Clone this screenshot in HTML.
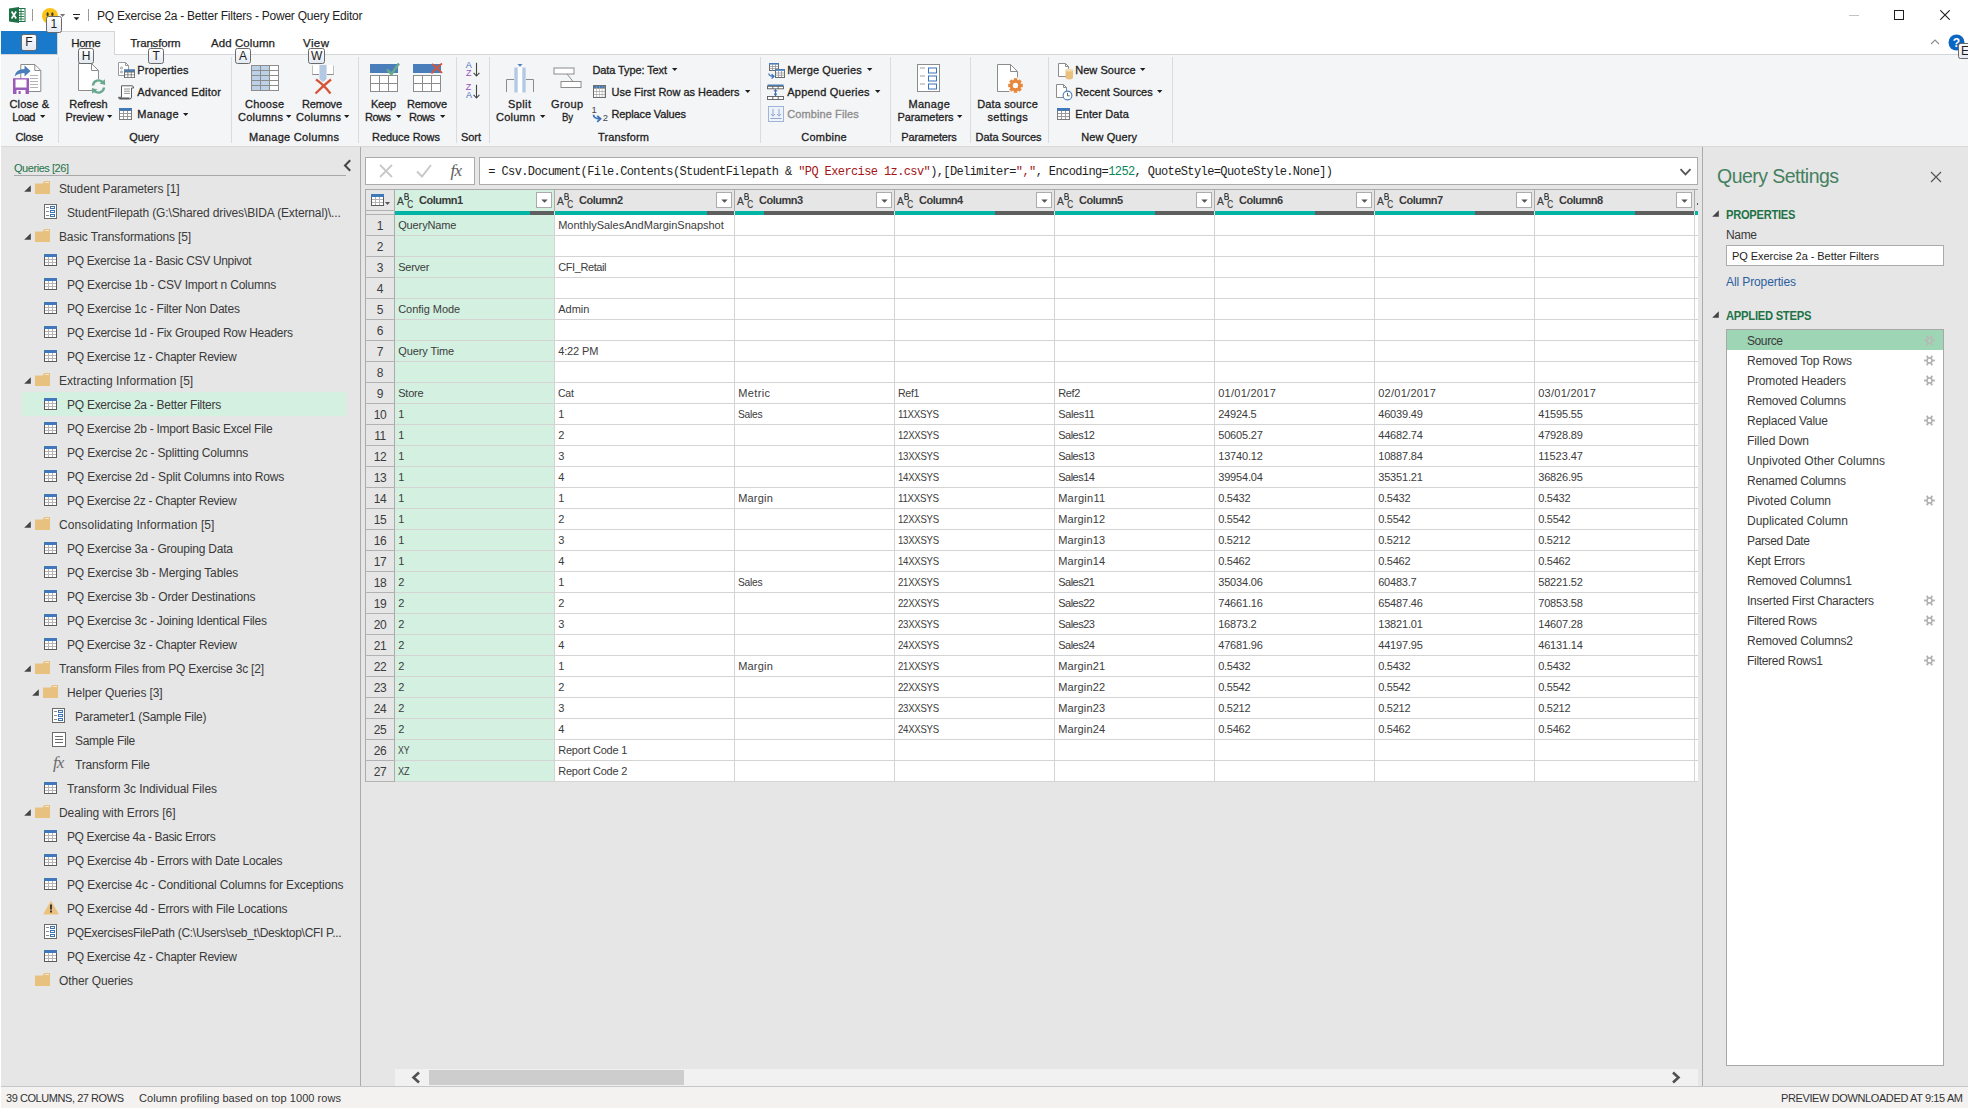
<!DOCTYPE html>
<html><head><meta charset="utf-8"><title>PQ Exercise 2a - Better Filters - Power Query Editor</title>
<style>
html,body{margin:0;padding:0;overflow:hidden;}
body{width:1969px;height:1109px;overflow:hidden;position:relative;background:#e6e6e6;font-family:"Liberation Sans",sans-serif;}
.a{position:absolute;display:block;}
.t{position:absolute;white-space:nowrap;font-family:"Liberation Sans",sans-serif;}
</style></head><body>
<div class="a" style="left:0px;top:0px;width:1969px;height:54px;background:#ffffff;"></div>
<div class="a" style="left:0px;top:54px;width:1969px;height:92px;background:#f4f5f7;"></div>
<div class="a" style="left:0px;top:54px;width:1969px;height:1px;background:#d4d5d6;"></div>
<div class="a" style="left:0px;top:146px;width:1969px;height:1px;background:#d9d9d9;"></div>
<div class="a" style="left:360px;top:147px;width:1px;height:939px;background:#ababab;"></div>
<div class="a" style="left:1702px;top:147px;width:1px;height:939px;background:#ababab;"></div>
<svg class="a" style="left:9px;top:7px" width="17" height="16" viewBox="0 0 17 16"><rect x="6" y="1.5" width="10" height="13" fill="#fff" stroke="#1e7145" stroke-width="1"/>
<path d="M9 4.5h6M9 7h6M9 9.5h6M9 12h6M12 2v12" stroke="#1e7145" stroke-width="0.9" fill="none"/>
<path d="M0 1.6 L10 0 L10 16 L0 14.4 Z" fill="#1e7145"/>
<path d="M2.6 4.6 L7.2 11.4 M7.2 4.6 L2.6 11.4" stroke="#fff" stroke-width="1.7" fill="none"/></svg>
<div class="a" style="left:32px;top:9px;width:1px;height:12px;background:#9a9a9a;"></div>
<svg class="a" style="left:42px;top:8px" width="16" height="16" viewBox="0 0 16 16"><circle cx="8" cy="8" r="8" fill="#fbc316"/><ellipse cx="5.6" cy="6.2" rx="1.1" ry="1.9" fill="#3a3a3a"/><ellipse cx="10.4" cy="6.2" rx="1.1" ry="1.9" fill="#3a3a3a"/></svg>
<svg class="a" style="left:60px;top:14px" width="6" height="4" viewBox="0 0 6 4"><path d="M0 0 L5.2 0 L2.6 2.9 Z" fill="#777"/></svg>
<div class="a" style="left:73px;top:14px;width:7px;height:1px;background:#222;"></div>
<svg class="a" style="left:73px;top:17px" width="7" height="4" viewBox="0 0 7 4"><path d="M0.6 0.3 L6.4 0.3 L3.5 3.3 Z" fill="#222"/></svg>
<div class="a" style="left:88px;top:9px;width:1px;height:12px;background:#9a9a9a;"></div>
<div class="t" style="left:97.00px;top:6.80px;font-size:12px;line-height:18px;color:#1e1e1e;letter-spacing:-0.234px;">PQ Exercise 2a - Better Filters - Power Query Editor</div>
<div class="a" style="left:1849px;top:15px;width:10px;height:1px;background:#c4c4c4;"></div>
<div class="a" style="left:1894px;top:10px;width:10px;height:10px;border:1px solid #1e1e1e;box-sizing:border-box;"></div>
<svg class="a" style="left:1940px;top:10px" width="10" height="10" viewBox="0 0 10 10"><path d="M0.3 0.3 L9.7 9.7 M9.7 0.3 L0.3 9.7" stroke="#1e1e1e" stroke-width="1.1" fill="none"/></svg>
<svg class="a" style="left:1930px;top:39px" width="10" height="6" viewBox="0 0 10 6"><path d="M1 5 L5 1 L9 5" fill="none" stroke="#8c8c8c" stroke-width="1.1"/></svg>
<svg class="a" style="left:1948px;top:33.5px" width="17" height="17" viewBox="0 0 17 17"><circle cx="8.5" cy="8.5" r="8" fill="#0a66c2"/><text x="8.5" y="13" font-family="Liberation Sans" font-weight="bold" font-size="12" fill="#fff" text-anchor="middle">?</text></svg>
<div class="a" style="left:1px;top:31px;width:56px;height:23px;background:#1979ca;"></div>
<div class="a" style="left:57px;top:31px;width:58px;height:24px;background:#f4f5f7;border:1px solid #d4d5d6;box-sizing:border-box;border-bottom:none;"></div>
<div class="t" style="left:71.30px;top:35.35px;font-size:11.5px;line-height:17.5px;color:#1e1e1e;letter-spacing:-0.459px;-webkit-text-stroke:0.25px #1e1e1e;">Home</div>
<div class="t" style="left:130.20px;top:35.35px;font-size:11.5px;line-height:17.5px;color:#1e1e1e;letter-spacing:-0.196px;-webkit-text-stroke:0.25px #1e1e1e;">Transform</div>
<div class="t" style="left:211.00px;top:35.35px;font-size:11.5px;line-height:17.5px;color:#1e1e1e;letter-spacing:0.080px;-webkit-text-stroke:0.25px #1e1e1e;">Add Column</div>
<div class="t" style="left:303.00px;top:35.35px;font-size:11.5px;line-height:17.5px;color:#1e1e1e;letter-spacing:0.427px;-webkit-text-stroke:0.25px #1e1e1e;">View</div>
<div class="a" style="left:58px;top:57px;width:1px;height:86px;background:#dadbdc;"></div>
<div class="a" style="left:231px;top:57px;width:1px;height:86px;background:#dadbdc;"></div>
<div class="a" style="left:358px;top:57px;width:1px;height:86px;background:#dadbdc;"></div>
<div class="a" style="left:456px;top:57px;width:1px;height:86px;background:#dadbdc;"></div>
<div class="a" style="left:489px;top:57px;width:1px;height:86px;background:#dadbdc;"></div>
<div class="a" style="left:760px;top:57px;width:1px;height:86px;background:#dadbdc;"></div>
<div class="a" style="left:890px;top:57px;width:1px;height:86px;background:#dadbdc;"></div>
<div class="a" style="left:970px;top:57px;width:1px;height:86px;background:#dadbdc;"></div>
<div class="a" style="left:1048px;top:57px;width:1px;height:86px;background:#dadbdc;"></div>
<div class="a" style="left:1172px;top:57px;width:1px;height:86px;background:#dadbdc;"></div>
<div class="t" style="left:9.50px;top:95.80px;font-size:11px;line-height:17px;color:#1e1e1e;letter-spacing:0.164px;-webkit-text-stroke:0.3px #1e1e1e;">Close &amp;</div>
<div class="t" style="left:12.20px;top:108.50px;font-size:11px;line-height:17px;color:#1e1e1e;letter-spacing:-0.391px;-webkit-text-stroke:0.3px #1e1e1e;">Load</div>
<svg class="a" style="left:39.5px;top:115px" width="6" height="3" viewBox="0 0 6 3"><path d="M0 0 L5.4 0 L2.7 3 Z" fill="#1e1e1e"/></svg>
<div class="t" style="left:15.60px;top:128.80px;font-size:11px;line-height:17px;color:#1e1e1e;letter-spacing:-0.181px;-webkit-text-stroke:0.3px #1e1e1e;">Close</div>
<svg class="a" style="left:12px;top:63px" width="30" height="32" viewBox="0 0 30 32">
<path d="M8.8 1.5 L22.8 1.5 L28.8 7.5 L28.8 28.5 L8.8 28.5 Z" fill="#fff" stroke="#8a8a8a"/>
<path d="M22.8 1.5 L22.8 7.5 L28.8 7.5" fill="none" stroke="#8a8a8a"/>
<path d="M18 12.5h8M18 15.5h8M18 18.5h8M18 21.5h8M18 24.5h8" stroke="#b4b4b4" stroke-width="1"/>
<path d="M2.6 13.5 Q3.5 6 12.5 6 L12.5 2.4 L18.6 8 L12.5 13.4 L12.5 10 Q6 10 2.6 13.5 Z" fill="#4a7ebb"/>
<path d="M1 15.2 L17 15.2 L17 31 L1 31 Z" fill="#9a5cb8" />
<rect x="3.5" y="16.5" width="11" height="8" fill="#fff"/>
<rect x="4.5" y="27" width="9" height="4" fill="#fff"/><rect x="6.5" y="28" width="2.2" height="3" fill="#9a5cb8"/></svg>
<div class="t" style="left:69.30px;top:95.80px;font-size:11px;line-height:17px;color:#1e1e1e;letter-spacing:-0.036px;-webkit-text-stroke:0.3px #1e1e1e;">Refresh</div>
<div class="t" style="left:65.40px;top:108.50px;font-size:11px;line-height:17px;color:#1e1e1e;letter-spacing:-0.088px;-webkit-text-stroke:0.3px #1e1e1e;">Preview</div>
<svg class="a" style="left:107px;top:115px" width="6" height="3" viewBox="0 0 6 3"><path d="M0 0 L5.4 0 L2.7 3 Z" fill="#1e1e1e"/></svg>
<svg class="a" style="left:78px;top:63px" width="28" height="31" viewBox="0 0 28 31">
<path d="M0.5 0.5 L13.5 0.5 L20.5 7.5 L20.5 27.5 L0.5 27.5 Z" fill="#fff" stroke="#8c8c8c"/>
<path d="M13.5 0.5 L13.5 7.5 L20.5 7.5" fill="none" stroke="#8c8c8c"/>
<circle cx="20.5" cy="23.5" r="7.5" fill="#f4f5f7"/>
<path d="M15 22.5 A5.6 5.6 0 0 1 25 19.6" fill="none" stroke="#68a88f" stroke-width="2.4"/>
<path d="M26.8 16.2 L27.2 22 L21.6 20.6 Z" fill="#68a88f"/>
<path d="M26 24.5 A5.6 5.6 0 0 1 16 27.4" fill="none" stroke="#68a88f" stroke-width="2.4"/>
<path d="M14.2 30.8 L13.8 25 L19.4 26.4 Z" fill="#68a88f"/></svg>
<svg class="a" style="left:118px;top:62px" width="17" height="16" viewBox="0 0 17 16">
<path d="M0.5 0.5 L7.5 0.5 L10.5 3.5 L10.5 13.5 L0.5 13.5 Z" fill="#fff" stroke="#9a9a9a"/>
<path d="M7.5 0.5 L7.5 3.5 L10.5 3.5" fill="none" stroke="#9a9a9a"/>
<circle cx="3.5" cy="6" r="1" fill="none" stroke="#8a8a8a" stroke-width="0.8"/><circle cx="3.5" cy="10" r="1" fill="none" stroke="#8a8a8a" stroke-width="0.8"/>
<rect x="6" y="7.5" width="11" height="8.5" fill="#6a6a6a"/><rect x="6" y="7.5" width="11" height="2" fill="#4a7ebb"/>
<rect x="7" y="10.5" width="2.5" height="2" fill="#fff"/><rect x="10.3" y="10.5" width="2.5" height="2" fill="#fff"/><rect x="13.6" y="10.5" width="2.5" height="2" fill="#fff"/>
<rect x="7" y="13.2" width="2.5" height="2" fill="#fff"/><rect x="10.3" y="13.2" width="2.5" height="2" fill="#fff"/><rect x="13.6" y="13.2" width="2.5" height="2" fill="#fff"/></svg>
<div class="t" style="left:137.30px;top:61.70px;font-size:11px;line-height:17px;color:#1e1e1e;letter-spacing:0.107px;-webkit-text-stroke:0.3px #1e1e1e;">Properties</div>
<svg class="a" style="left:118px;top:85px" width="17" height="15" viewBox="0 0 17 15">
<path d="M3.5 0.8 L14 0.8 Q15.6 0.8 15.6 3 L13.5 3 L13.5 12 Q13.5 14 11.5 14 L2 14 Q0.5 14 0.5 12.3 L3.5 12.3 Z" fill="#fff" stroke="#5a5a5a"/>
<path d="M0.8 12.6 L11.5 12.6 L11.5 14 L2 14 Z" fill="#5a5a5a"/>
<path d="M6 4h6M6 6.2h6M6 8.4h6" stroke="#8a8a8a" stroke-width="0.9"/></svg>
<div class="t" style="left:137.30px;top:83.70px;font-size:11px;line-height:17px;color:#1e1e1e;letter-spacing:0.213px;-webkit-text-stroke:0.3px #1e1e1e;">Advanced Editor</div>
<svg class="a" style="left:119px;top:108px" width="13" height="12" viewBox="0 0 13 12"><rect x="0" y="0" width="13" height="12" fill="#7a7a7a"/><rect x="1" y="3" width="11" height="8" fill="#9a9a9a"/><rect x="0" y="0" width="13" height="2.6" fill="#3f79ba"/><rect x="1" y="3" width="3" height="2" fill="#fff"/><rect x="5" y="3" width="3" height="2" fill="#fff"/><rect x="9" y="3" width="3" height="2" fill="#fff"/><rect x="1" y="6" width="3" height="2" fill="#fff"/><rect x="5" y="6" width="3" height="2" fill="#fff"/><rect x="9" y="6" width="3" height="2" fill="#fff"/><rect x="1" y="9" width="3" height="2" fill="#fff"/><rect x="5" y="9" width="3" height="2" fill="#fff"/><rect x="9" y="9" width="3" height="2" fill="#fff"/></svg>
<div class="t" style="left:137.30px;top:105.70px;font-size:11px;line-height:17px;color:#1e1e1e;letter-spacing:0.309px;-webkit-text-stroke:0.3px #1e1e1e;">Manage</div>
<svg class="a" style="left:183px;top:113px" width="6" height="3" viewBox="0 0 6 3"><path d="M0 0 L5.4 0 L2.7 3 Z" fill="#1e1e1e"/></svg>
<div class="t" style="left:129.20px;top:128.80px;font-size:11px;line-height:17px;color:#1e1e1e;letter-spacing:-0.039px;-webkit-text-stroke:0.3px #1e1e1e;">Query</div>
<svg class="a" style="left:251px;top:65px" width="28" height="26" viewBox="0 0 28 26"><rect x="0" y="0" width="28" height="26" fill="#8c8c8c"/><rect x="1" y="1" width="8" height="4" fill="#bcd0e8"/><rect x="10" y="1" width="8" height="4" fill="#bcd0e8"/><rect x="19" y="1" width="8" height="4" fill="#fff"/><rect x="1" y="6" width="8" height="4" fill="#bcd0e8"/><rect x="10" y="6" width="8" height="4" fill="#bcd0e8"/><rect x="19" y="6" width="8" height="4" fill="#fff"/><rect x="1" y="11" width="8" height="4" fill="#bcd0e8"/><rect x="10" y="11" width="8" height="4" fill="#bcd0e8"/><rect x="19" y="11" width="8" height="4" fill="#fff"/><rect x="1" y="16" width="8" height="4" fill="#bcd0e8"/><rect x="10" y="16" width="8" height="4" fill="#bcd0e8"/><rect x="19" y="16" width="8" height="4" fill="#fff"/><rect x="1" y="21" width="8" height="4" fill="#bcd0e8"/><rect x="10" y="21" width="8" height="4" fill="#bcd0e8"/><rect x="19" y="21" width="8" height="4" fill="#fff"/></svg>
<div class="t" style="left:245.00px;top:95.80px;font-size:11px;line-height:17px;color:#1e1e1e;letter-spacing:0.217px;-webkit-text-stroke:0.3px #1e1e1e;">Choose</div>
<div class="t" style="left:238.00px;top:108.50px;font-size:11px;line-height:17px;color:#1e1e1e;letter-spacing:0.266px;-webkit-text-stroke:0.3px #1e1e1e;">Columns</div>
<svg class="a" style="left:286px;top:115px" width="6" height="3" viewBox="0 0 6 3"><path d="M0 0 L5.4 0 L2.7 3 Z" fill="#1e1e1e"/></svg>
<svg class="a" style="left:311px;top:64px" width="24" height="31" viewBox="0 0 24 31">
<path d="M1.5 1.5 L1.5 10.5 L8 10.5" fill="none" stroke="#8c8c8c"/><path d="M22.5 1.5 L22.5 10.5 L16 10.5" fill="none" stroke="#8c8c8c"/>
<rect x="1.5" y="1" width="6.5" height="9" fill="#fff" opacity="0.9"/><rect x="16" y="1" width="6.5" height="9" fill="#fff" opacity="0.9"/>
<path d="M8.5 1 L15.5 1 L15.5 15 L12 18 L8.5 15 Z" fill="#b3c8e2"/>
<path d="M5 15.5 Q12 20 19.5 29.5 M20 15.5 Q12 22 4.5 29.5" fill="none" stroke="#d6553a" stroke-width="2.3"/></svg>
<div class="t" style="left:302.00px;top:95.80px;font-size:11px;line-height:17px;color:#1e1e1e;letter-spacing:-0.192px;-webkit-text-stroke:0.3px #1e1e1e;">Remove</div>
<div class="t" style="left:296.00px;top:108.50px;font-size:11px;line-height:17px;color:#1e1e1e;letter-spacing:0.266px;-webkit-text-stroke:0.3px #1e1e1e;">Columns</div>
<svg class="a" style="left:344px;top:115px" width="6" height="3" viewBox="0 0 6 3"><path d="M0 0 L5.4 0 L2.7 3 Z" fill="#1e1e1e"/></svg>
<div class="t" style="left:249.00px;top:128.80px;font-size:11px;line-height:17px;color:#1e1e1e;letter-spacing:0.291px;-webkit-text-stroke:0.3px #1e1e1e;">Manage Columns</div>
<svg class="a" style="left:370px;top:62px" width="30" height="30" viewBox="0 0 30 30"><g transform="translate(0,2)"><rect x="0" y="0" width="28" height="9" fill="#4a7ebb"/><rect x="0" y="11" width="28" height="17" fill="#8c8c8c"/><rect x="1" y="12" width="8" height="7" fill="#fff"/><rect x="10" y="12" width="8" height="7" fill="#fff"/><rect x="19" y="12" width="8" height="7" fill="#fff"/><rect x="1" y="20" width="8" height="7" fill="#fff"/><rect x="10" y="20" width="8" height="7" fill="#fff"/><rect x="19" y="20" width="8" height="7" fill="#fff"/></g><path d="M17 7.5 L21.5 12 L29 1.5" fill="none" stroke="#68a88f" stroke-width="2.6"/></svg>
<svg class="a" style="left:413px;top:62px" width="30" height="30" viewBox="0 0 30 30"><g transform="translate(0,2)"><rect x="0" y="0" width="28" height="9" fill="#4a7ebb"/><rect x="0" y="11" width="28" height="17" fill="#8c8c8c"/><rect x="1" y="12" width="8" height="7" fill="#fff"/><rect x="10" y="12" width="8" height="7" fill="#fff"/><rect x="19" y="12" width="8" height="7" fill="#fff"/><rect x="1" y="20" width="8" height="7" fill="#fff"/><rect x="10" y="20" width="8" height="7" fill="#fff"/><rect x="19" y="20" width="8" height="7" fill="#fff"/></g><path d="M19 2 Q24 5 29 11 M29 1.5 Q23 6 18.5 11.5" fill="none" stroke="#d6553a" stroke-width="1.9"/></svg>
<div class="t" style="left:371.00px;top:95.80px;font-size:11px;line-height:17px;color:#1e1e1e;letter-spacing:-0.230px;-webkit-text-stroke:0.3px #1e1e1e;">Keep</div>
<div class="t" style="left:365.00px;top:108.50px;font-size:11px;line-height:17px;color:#1e1e1e;letter-spacing:-0.502px;-webkit-text-stroke:0.3px #1e1e1e;">Rows</div>
<svg class="a" style="left:396px;top:115px" width="6" height="3" viewBox="0 0 6 3"><path d="M0 0 L5.4 0 L2.7 3 Z" fill="#1e1e1e"/></svg>
<div class="t" style="left:407.00px;top:95.80px;font-size:11px;line-height:17px;color:#1e1e1e;letter-spacing:-0.192px;-webkit-text-stroke:0.3px #1e1e1e;">Remove</div>
<div class="t" style="left:409.00px;top:108.50px;font-size:11px;line-height:17px;color:#1e1e1e;letter-spacing:-0.502px;-webkit-text-stroke:0.3px #1e1e1e;">Rows</div>
<svg class="a" style="left:440px;top:115px" width="6" height="3" viewBox="0 0 6 3"><path d="M0 0 L5.4 0 L2.7 3 Z" fill="#1e1e1e"/></svg>
<div class="t" style="left:372.00px;top:128.80px;font-size:11px;line-height:17px;color:#1e1e1e;letter-spacing:-0.048px;-webkit-text-stroke:0.3px #1e1e1e;">Reduce Rows</div>
<div class="t" style="left:465.7px;top:60.4px;font-size:9px;line-height:10px;color:#4a6fc0">A</div>
<div class="t" style="left:466px;top:68.2px;font-size:9px;line-height:10px;color:#9b4fc4">Z</div>
<svg class="a" style="left:473px;top:62px" width="8" height="15" viewBox="0 0 8 15"><path d="M3.5 0.8 L3.5 14 M0.6 10.8 L3.5 14 L6.4 10.8" fill="none" stroke="#444" stroke-width="1.1"/></svg>
<div class="t" style="left:465.7px;top:82.4px;font-size:9px;line-height:10px;color:#9b4fc4">Z</div>
<div class="t" style="left:466px;top:90.2px;font-size:9px;line-height:10px;color:#4a6fc0">A</div>
<svg class="a" style="left:473px;top:84px" width="8" height="15" viewBox="0 0 8 15"><path d="M3.5 0.8 L3.5 14 M0.6 10.8 L3.5 14 L6.4 10.8" fill="none" stroke="#444" stroke-width="1.1"/></svg>
<div class="t" style="left:461.00px;top:128.80px;font-size:11px;line-height:17px;color:#1e1e1e;letter-spacing:-0.058px;-webkit-text-stroke:0.3px #1e1e1e;">Sort</div>
<svg class="a" style="left:505px;top:63px" width="30" height="30" viewBox="0 0 30 30">
<path d="M1.5 29 L1.5 16.5 L9 16.5" fill="none" stroke="#8c8c8c"/><path d="M28.5 29 L28.5 16.5 L21 16.5" fill="none" stroke="#8c8c8c"/>
<rect x="9.5" y="4.5" width="11" height="25" fill="#fff"/>
<rect x="9.3" y="4.5" width="3.4" height="25" fill="#b3c8e2"/><rect x="17.3" y="4.5" width="3.4" height="25" fill="#b3c8e2"/>
<path d="M12.5 1 L17.5 1 L15 3.8 Z" fill="#4a7ebb"/></svg>
<div class="t" style="left:508.00px;top:95.80px;font-size:11px;line-height:17px;color:#1e1e1e;letter-spacing:0.400px;-webkit-text-stroke:0.3px #1e1e1e;">Split</div>
<div class="t" style="left:496.00px;top:108.50px;font-size:11px;line-height:17px;color:#1e1e1e;letter-spacing:0.219px;-webkit-text-stroke:0.3px #1e1e1e;">Column</div>
<svg class="a" style="left:539.5px;top:115px" width="6" height="3" viewBox="0 0 6 3"><path d="M0 0 L5.4 0 L2.7 3 Z" fill="#1e1e1e"/></svg>
<svg class="a" style="left:553px;top:67px" width="30" height="22" viewBox="0 0 30 22">
<rect x="1" y="1" width="20" height="6" fill="#fff" stroke="#8c8c8c"/>
<rect x="8" y="14.5" width="20" height="6" fill="#fff" stroke="#8c8c8c"/>
<path d="M14 7 L20 14.5" stroke="#8c8c8c" fill="none"/></svg>
<div class="t" style="left:551.00px;top:95.80px;font-size:11px;line-height:17px;color:#1e1e1e;letter-spacing:0.356px;-webkit-text-stroke:0.3px #1e1e1e;">Group</div>
<div class="t" style="left:562.00px;top:108.50px;font-size:11px;line-height:17px;color:#1e1e1e;letter-spacing:-0.300px;transform:scaleX(0.8774);transform-origin:0 0;-webkit-text-stroke:0.3px #1e1e1e;">By</div>
<div class="t" style="left:592.50px;top:61.50px;font-size:11px;line-height:17px;color:#1e1e1e;letter-spacing:-0.110px;-webkit-text-stroke:0.3px #1e1e1e;">Data Type: Text</div>
<svg class="a" style="left:671.5px;top:68px" width="6" height="3" viewBox="0 0 6 3"><path d="M0 0 L5.4 0 L2.7 3 Z" fill="#1e1e1e"/></svg>
<svg class="a" style="left:593px;top:85px" width="13" height="13" viewBox="0 0 13 13"><rect x="0" y="0" width="13" height="13" fill="#6e6e6e"/><rect x="1" y="1" width="11" height="11" fill="#a8a8a8"/><rect x="1.00" y="1" width="2.2" height="2" fill="#3f79ba"/><rect x="3.80" y="1" width="2.2" height="2" fill="#3f79ba"/><rect x="6.60" y="1" width="2.2" height="2" fill="#3f79ba"/><rect x="9.40" y="1" width="2.2" height="2" fill="#3f79ba"/><rect x="1.00" y="4.00" width="2.2" height="2.1" fill="#fff"/><rect x="3.80" y="4.00" width="2.2" height="2.1" fill="#fff"/><rect x="6.60" y="4.00" width="2.2" height="2.1" fill="#fff"/><rect x="9.40" y="4.00" width="2.2" height="2.1" fill="#fff"/><rect x="1.00" y="6.90" width="2.2" height="2.1" fill="#fff"/><rect x="3.80" y="6.90" width="2.2" height="2.1" fill="#fff"/><rect x="6.60" y="6.90" width="2.2" height="2.1" fill="#fff"/><rect x="9.40" y="6.90" width="2.2" height="2.1" fill="#fff"/><rect x="1.00" y="9.80" width="2.2" height="2.1" fill="#fff"/><rect x="3.80" y="9.80" width="2.2" height="2.1" fill="#fff"/><rect x="6.60" y="9.80" width="2.2" height="2.1" fill="#fff"/><rect x="9.40" y="9.80" width="2.2" height="2.1" fill="#fff"/></svg>
<div class="t" style="left:611.50px;top:83.50px;font-size:11px;line-height:17px;color:#1e1e1e;letter-spacing:-0.016px;-webkit-text-stroke:0.3px #1e1e1e;">Use First Row as Headers</div>
<svg class="a" style="left:744.5px;top:90px" width="6" height="3" viewBox="0 0 6 3"><path d="M0 0 L5.4 0 L2.7 3 Z" fill="#1e1e1e"/></svg>
<div class="t" style="left:591.5px;top:104.7px;font-size:9.5px;line-height:10px;color:#444">1</div>
<div class="t" style="left:602.8px;top:113.4px;font-size:9.5px;line-height:10px;color:#444">2</div>
<svg class="a" style="left:592px;top:113.5px" width="11" height="9" viewBox="0 0 11 9"><path d="M1.5 0.8 Q1.8 4.8 7.6 4.8 M5.2 1.8 L8.6 4.8 L5.2 7.8" fill="none" stroke="#3b73b9" stroke-width="1.8"/></svg>
<div class="t" style="left:611.50px;top:105.70px;font-size:11px;line-height:17px;color:#1e1e1e;letter-spacing:-0.134px;-webkit-text-stroke:0.3px #1e1e1e;">Replace Values</div>
<div class="t" style="left:598.00px;top:128.80px;font-size:11px;line-height:17px;color:#1e1e1e;letter-spacing:0.161px;-webkit-text-stroke:0.3px #1e1e1e;">Transform</div>
<svg class="a" style="left:767.5px;top:63px" width="17" height="16" viewBox="0 0 17 16">
<rect x="1.5" y="0.5" width="9" height="7" fill="#fff" stroke="#6a6a6a"/><rect x="1" y="0" width="10" height="1.6" fill="#4a7ebb"/>
<path d="M1.5 3.5h9M1.5 5.5h9M4.5 1.5v6M7.5 1.5v6" stroke="#8a8a8a" stroke-width="0.7"/>
<rect x="7.5" y="6.5" width="9" height="8" fill="#fff" stroke="#6a6a6a"/><rect x="7" y="6" width="10" height="1.8" fill="#4a7ebb"/>
<path d="M7.5 10h9M7.5 12.2h9M10.5 8v6.5M13.5 8v6.5" stroke="#8a8a8a" stroke-width="0.7"/>
<path d="M0.8 10.5 Q1 13.3 5.6 13.3 M3.6 11.2 L6 13.3 L3.6 15.4" fill="none" stroke="#3b73b9" stroke-width="1.3"/></svg>
<div class="t" style="left:787.30px;top:61.50px;font-size:11px;line-height:17px;color:#1e1e1e;letter-spacing:0.137px;-webkit-text-stroke:0.3px #1e1e1e;">Merge Queries</div>
<svg class="a" style="left:867px;top:68px" width="6" height="3" viewBox="0 0 6 3"><path d="M0 0 L5.4 0 L2.7 3 Z" fill="#1e1e1e"/></svg>
<svg class="a" style="left:767px;top:84px" width="17" height="16" viewBox="0 0 17 16">
<rect x="0.5" y="0.5" width="16" height="1.8" fill="#4a7ebb"/>
<rect x="0.5" y="2.3" width="16" height="2.5" fill="#fff" stroke="#5a5a5a" stroke-width="0.9"/><path d="M5.8 2.3v2.5M11.2 2.3v2.5" stroke="#5a5a5a" stroke-width="0.9"/>
<path d="M8.5 5 L8.5 12" stroke="#5a5a5a" stroke-width="0.9"/><path d="M6.3 6.2 L10.7 6.2 L8.5 8.4 Z" fill="#3b73b9"/><circle cx="8.5" cy="10.3" r="1.3" fill="#3b73b9"/>
<rect x="0.5" y="12.5" width="16" height="3" fill="#fff" stroke="#5a5a5a" stroke-width="0.9"/><path d="M5.8 12.5v3M11.2 12.5v3" stroke="#5a5a5a" stroke-width="0.9"/></svg>
<div class="t" style="left:787.30px;top:83.50px;font-size:11px;line-height:17px;color:#1e1e1e;letter-spacing:0.215px;-webkit-text-stroke:0.3px #1e1e1e;">Append Queries</div>
<svg class="a" style="left:875px;top:90px" width="6" height="3" viewBox="0 0 6 3"><path d="M0 0 L5.4 0 L2.7 3 Z" fill="#1e1e1e"/></svg>
<svg class="a" style="left:768px;top:106px" width="16" height="16" viewBox="0 0 16 16">
<rect x="0.5" y="0.5" width="15" height="15" fill="#eef2f9" stroke="#9fb5d8"/>
<path d="M5 3 L5 10 M3 8 L5 10.2 L7 8 M11 3 L11 10 M9 8 L11 10.2 L13 8" fill="none" stroke="#8fa8cf" stroke-width="1"/>
<path d="M2.5 12.5 L13.5 12.5" stroke="#8fa8cf" stroke-width="1"/></svg>
<div class="t" style="left:787.30px;top:105.70px;font-size:11px;line-height:17px;color:#8c8c8c;letter-spacing:0.091px;-webkit-text-stroke:0.3px #8c8c8c;">Combine Files</div>
<div class="t" style="left:801.30px;top:128.80px;font-size:11px;line-height:17px;color:#1e1e1e;letter-spacing:0.229px;-webkit-text-stroke:0.3px #1e1e1e;">Combine</div>
<svg class="a" style="left:917px;top:64px" width="23" height="28" viewBox="0 0 23 28"><rect x="0.5" y="0.5" width="22" height="27" fill="#fff" stroke="#8c8c8c"/><rect x="3" y="3.5" width="5" height="1" fill="#a0a0a0"/><rect x="11.5" y="4" width="8" height="5" fill="#fff" stroke="#3b73b9"/><rect x="3" y="11.5" width="5" height="1" fill="#a0a0a0"/><rect x="11.5" y="12" width="8" height="5" fill="#fff" stroke="#3b73b9"/><rect x="3" y="19.5" width="5" height="1" fill="#a0a0a0"/><rect x="11.5" y="20" width="8" height="5" fill="#fff" stroke="#3b73b9"/></svg>
<div class="t" style="left:908.40px;top:95.80px;font-size:11px;line-height:17px;color:#1e1e1e;letter-spacing:0.349px;-webkit-text-stroke:0.3px #1e1e1e;">Manage</div>
<div class="t" style="left:897.40px;top:108.50px;font-size:11px;line-height:17px;color:#1e1e1e;letter-spacing:-0.084px;-webkit-text-stroke:0.3px #1e1e1e;">Parameters</div>
<svg class="a" style="left:957px;top:115px" width="6" height="3" viewBox="0 0 6 3"><path d="M0 0 L5.4 0 L2.7 3 Z" fill="#1e1e1e"/></svg>
<div class="t" style="left:901.30px;top:128.80px;font-size:11px;line-height:17px;color:#1e1e1e;letter-spacing:-0.151px;-webkit-text-stroke:0.3px #1e1e1e;">Parameters</div>
<svg class="a" style="left:997px;top:64px" width="27" height="30" viewBox="0 0 27 30">
<path d="M0.5 0.5 L13.5 0.5 L20.5 7.5 L20.5 27.5 L0.5 27.5 Z" fill="#fff" stroke="#8c8c8c"/>
<path d="M13.5 0.5 L13.5 7.5 L20.5 7.5" fill="none" stroke="#8c8c8c"/>
<circle cx="18.5" cy="21.5" r="8.6" fill="#f4f5f7"/><rect x="10" y="13" width="10" height="14" fill="#fff"/><path d="M22.50 21.50 L25.80 21.50" stroke="#e8873a" stroke-width="3.4"/><path d="M21.33 24.33 L23.66 26.66" stroke="#e8873a" stroke-width="3.4"/><path d="M18.50 25.50 L18.50 28.80" stroke="#e8873a" stroke-width="3.4"/><path d="M15.67 24.33 L13.34 26.66" stroke="#e8873a" stroke-width="3.4"/><path d="M14.50 21.50 L11.20 21.50" stroke="#e8873a" stroke-width="3.4"/><path d="M15.67 18.67 L13.34 16.34" stroke="#e8873a" stroke-width="3.4"/><path d="M18.50 17.50 L18.50 14.20" stroke="#e8873a" stroke-width="3.4"/><path d="M21.33 18.67 L23.66 16.34" stroke="#e8873a" stroke-width="3.4"/><circle cx="18.5" cy="21.5" r="4.2" fill="none" stroke="#e8873a" stroke-width="3"/><circle cx="18.5" cy="21.5" r="2.3" fill="#fff"/></svg>
<div class="t" style="left:977.30px;top:95.80px;font-size:11px;line-height:17px;color:#1e1e1e;letter-spacing:0.119px;-webkit-text-stroke:0.3px #1e1e1e;">Data source</div>
<div class="t" style="left:987.40px;top:108.50px;font-size:11px;line-height:17px;color:#1e1e1e;letter-spacing:0.341px;-webkit-text-stroke:0.3px #1e1e1e;">settings</div>
<div class="t" style="left:975.60px;top:128.80px;font-size:11px;line-height:17px;color:#1e1e1e;letter-spacing:-0.068px;-webkit-text-stroke:0.3px #1e1e1e;">Data Sources</div>
<svg class="a" style="left:1057.5px;top:63px" width="16" height="17" viewBox="0 0 16 17">
<path d="M0.5 0.5 L7.5 0.5 L10.5 3.5 L10.5 13.5 L0.5 13.5 Z" fill="#fff" stroke="#8c8c8c"/>
<path d="M7.5 0.5 L7.5 3.5 L10.5 3.5" fill="none" stroke="#8c8c8c"/>
<path d="M7.5 7 L7.5 14.5 Q7.5 16.4 11.2 16.4 Q15 16.4 15 14.5 L15 7 Z" fill="#e8c17f"/><ellipse cx="11.25" cy="7" rx="3.75" ry="1.5" fill="#f3dcae"/></svg>
<div class="t" style="left:1075.20px;top:61.50px;font-size:11px;line-height:17px;color:#1e1e1e;letter-spacing:0.054px;-webkit-text-stroke:0.3px #1e1e1e;">New Source</div>
<svg class="a" style="left:1140px;top:68px" width="6" height="3" viewBox="0 0 6 3"><path d="M0 0 L5.4 0 L2.7 3 Z" fill="#1e1e1e"/></svg>
<svg class="a" style="left:1056px;top:84px" width="17" height="17" viewBox="0 0 17 17">
<path d="M0.5 0.5 L7.5 0.5 L10.5 3.5 L10.5 13.5 L0.5 13.5 Z" fill="#fff" stroke="#8c8c8c"/>
<path d="M7.5 0.5 L7.5 3.5 L10.5 3.5" fill="none" stroke="#8c8c8c"/>
<circle cx="11.5" cy="11.5" r="4.4" fill="#fff" stroke="#4a7ebb" stroke-width="1.1"/><path d="M11.5 8.8 L11.5 11.8 L13.6 11.8" fill="none" stroke="#555" stroke-width="0.9"/></svg>
<div class="t" style="left:1075.20px;top:83.50px;font-size:11px;line-height:17px;color:#1e1e1e;letter-spacing:-0.059px;-webkit-text-stroke:0.3px #1e1e1e;">Recent Sources</div>
<svg class="a" style="left:1157px;top:90px" width="6" height="3" viewBox="0 0 6 3"><path d="M0 0 L5.4 0 L2.7 3 Z" fill="#1e1e1e"/></svg>
<svg class="a" style="left:1057px;top:108px" width="13" height="12" viewBox="0 0 13 12"><rect x="0" y="0" width="13" height="12" fill="#7a7a7a"/><rect x="1" y="3" width="11" height="8" fill="#9a9a9a"/><rect x="0" y="0" width="13" height="2.6" fill="#3f79ba"/><rect x="1" y="3" width="3" height="2" fill="#fff"/><rect x="5" y="3" width="3" height="2" fill="#fff"/><rect x="9" y="3" width="3" height="2" fill="#fff"/><rect x="1" y="6" width="3" height="2" fill="#fff"/><rect x="5" y="6" width="3" height="2" fill="#fff"/><rect x="9" y="6" width="3" height="2" fill="#fff"/><rect x="1" y="9" width="3" height="2" fill="#fff"/><rect x="5" y="9" width="3" height="2" fill="#fff"/><rect x="9" y="9" width="3" height="2" fill="#fff"/></svg>
<div class="t" style="left:1075.20px;top:105.70px;font-size:11px;line-height:17px;color:#1e1e1e;letter-spacing:0.124px;-webkit-text-stroke:0.3px #1e1e1e;">Enter Data</div>
<div class="t" style="left:1081.30px;top:128.80px;font-size:11px;line-height:17px;color:#1e1e1e;letter-spacing:0.085px;-webkit-text-stroke:0.3px #1e1e1e;">New Query</div>
<div class="a" style="left:46px;top:16px;width:15.6px;height:17px;overflow:hidden"><div style="box-sizing:border-box;width:15.6px;height:17px;background:linear-gradient(#fefefe,#e4e9f2);border:1px solid #6a6a6a;border-radius:2.5px;font-size:12px;line-height:15px;text-align:center;color:#1e1e1e">1</div></div>
<div class="a" style="left:21.2px;top:34px;width:15.4px;height:17px;overflow:hidden"><div style="box-sizing:border-box;width:15.4px;height:17px;background:linear-gradient(#fefefe,#e4e9f2);border:1px solid #6a6a6a;border-radius:2.5px;font-size:12px;line-height:15px;text-align:center;color:#1e1e1e">F</div></div>
<div class="a" style="left:78.3px;top:48px;width:15.4px;height:16px;overflow:hidden"><div style="box-sizing:border-box;width:15.4px;height:16px;background:linear-gradient(#fefefe,#e4e9f2);border:1px solid #6a6a6a;border-radius:2.5px;font-size:12px;line-height:14px;text-align:center;color:#1e1e1e">H</div></div>
<div class="a" style="left:148.4px;top:48px;width:15.4px;height:16px;overflow:hidden"><div style="box-sizing:border-box;width:15.4px;height:16px;background:linear-gradient(#fefefe,#e4e9f2);border:1px solid #6a6a6a;border-radius:2.5px;font-size:12px;line-height:14px;text-align:center;color:#1e1e1e">T</div></div>
<div class="a" style="left:235.3px;top:48px;width:15.4px;height:16px;overflow:hidden"><div style="box-sizing:border-box;width:15.4px;height:16px;background:linear-gradient(#fefefe,#e4e9f2);border:1px solid #6a6a6a;border-radius:2.5px;font-size:12px;line-height:14px;text-align:center;color:#1e1e1e">A</div></div>
<div class="a" style="left:308.2px;top:48px;width:17px;height:16px;overflow:hidden"><div style="box-sizing:border-box;width:17px;height:16px;background:linear-gradient(#fefefe,#e4e9f2);border:1px solid #6a6a6a;border-radius:2.5px;font-size:12px;line-height:14px;text-align:center;color:#1e1e1e">W</div></div>
<div class="a" style="left:1957.5px;top:42.5px;width:11.5px;height:16px;overflow:hidden"><div style="box-sizing:border-box;width:15px;height:16px;background:linear-gradient(#fefefe,#e4e9f2);border:1px solid #6a6a6a;border-radius:2.5px;font-size:12px;line-height:14px;text-align:center;color:#1e1e1e">E</div></div>
<div class="t" style="left:14.00px;top:159.50px;font-size:11px;line-height:17px;color:#217346;letter-spacing:-0.448px;">Queries [26]</div>
<div class="a" style="left:14px;top:175px;width:332px;height:1px;background:#a8a8a8;"></div>
<svg class="a" style="left:343px;top:159px" width="9" height="13" viewBox="0 0 9 13"><path d="M7.2 1.3 L2 6.5 L7.2 11.7" fill="none" stroke="#444" stroke-width="2"/></svg>
<svg class="a" style="left:23.7px;top:184.7px" width="7" height="7" viewBox="0 0 7 7"><path d="M6.8 0.2 L6.8 6.8 L0.2 6.8 Z" fill="#444"/></svg>
<svg class="a" style="left:35px;top:181.0px" width="15" height="13" viewBox="0 0 15 13"><path d="M0 2.5 L8 2.5 L9 0 L15 0 L15 13 L0 13 Z" fill="#e8c17f"/><rect x="10" y="1" width="4" height="1" fill="#f7e6c8"/></svg>
<div class="t" style="left:59.00px;top:179.50px;font-size:12px;line-height:18px;color:#3a3a3a;letter-spacing:-0.138px;">Student Parameters [1]</div>
<svg class="a" style="left:44px;top:204.0px" width="13" height="15" viewBox="0 0 13 15"><rect x="0.5" y="0.5" width="12" height="14" fill="#fff" stroke="#6a6a6a"/><rect x="2" y="3" width="3" height="1" fill="#8a8a8a"/><rect x="6.5" y="2.5" width="4" height="2" fill="#fff" stroke="#3b73b9"/><rect x="2" y="7" width="3" height="1" fill="#8a8a8a"/><rect x="6.5" y="6.5" width="4" height="2" fill="#fff" stroke="#3b73b9"/><rect x="2" y="11" width="3" height="1" fill="#8a8a8a"/><rect x="6.5" y="10.5" width="4" height="2" fill="#fff" stroke="#3b73b9"/></svg>
<div class="t" style="left:67.00px;top:203.50px;font-size:12px;line-height:18px;color:#3a3a3a;letter-spacing:-0.136px;">StudentFilepath (G:\Shared drives\BIDA (External)\...</div>
<svg class="a" style="left:23.7px;top:232.7px" width="7" height="7" viewBox="0 0 7 7"><path d="M6.8 0.2 L6.8 6.8 L0.2 6.8 Z" fill="#444"/></svg>
<svg class="a" style="left:35px;top:229.0px" width="15" height="13" viewBox="0 0 15 13"><path d="M0 2.5 L8 2.5 L9 0 L15 0 L15 13 L0 13 Z" fill="#e8c17f"/><rect x="10" y="1" width="4" height="1" fill="#f7e6c8"/></svg>
<div class="t" style="left:59.00px;top:227.50px;font-size:12px;line-height:18px;color:#3a3a3a;letter-spacing:-0.133px;">Basic Transformations [5]</div>
<svg class="a" style="left:44px;top:254.0px" width="13" height="12" viewBox="0 0 13 12"><rect x="0" y="0" width="13" height="12" fill="#5a5a5a"/><rect x="1" y="3" width="11" height="8" fill="#b4b4b4"/><rect x="0" y="0" width="13" height="3" fill="#3f79ba"/><rect x="1" y="3" width="3" height="2" fill="#fff"/><rect x="5" y="3" width="3" height="2" fill="#fff"/><rect x="9" y="3" width="3" height="2" fill="#fff"/><rect x="1" y="6" width="3" height="2" fill="#fff"/><rect x="5" y="6" width="3" height="2" fill="#fff"/><rect x="9" y="6" width="3" height="2" fill="#fff"/><rect x="1" y="9" width="3" height="2" fill="#fff"/><rect x="5" y="9" width="3" height="2" fill="#fff"/><rect x="9" y="9" width="3" height="2" fill="#fff"/></svg>
<div class="t" style="left:67.00px;top:251.50px;font-size:12px;line-height:18px;color:#3a3a3a;letter-spacing:-0.327px;">PQ Exercise 1a - Basic CSV Unpivot</div>
<svg class="a" style="left:44px;top:278.0px" width="13" height="12" viewBox="0 0 13 12"><rect x="0" y="0" width="13" height="12" fill="#5a5a5a"/><rect x="1" y="3" width="11" height="8" fill="#b4b4b4"/><rect x="0" y="0" width="13" height="3" fill="#3f79ba"/><rect x="1" y="3" width="3" height="2" fill="#fff"/><rect x="5" y="3" width="3" height="2" fill="#fff"/><rect x="9" y="3" width="3" height="2" fill="#fff"/><rect x="1" y="6" width="3" height="2" fill="#fff"/><rect x="5" y="6" width="3" height="2" fill="#fff"/><rect x="9" y="6" width="3" height="2" fill="#fff"/><rect x="1" y="9" width="3" height="2" fill="#fff"/><rect x="5" y="9" width="3" height="2" fill="#fff"/><rect x="9" y="9" width="3" height="2" fill="#fff"/></svg>
<div class="t" style="left:67.00px;top:275.50px;font-size:12px;line-height:18px;color:#3a3a3a;letter-spacing:-0.207px;">PQ Exercise 1b - CSV Import n Columns</div>
<svg class="a" style="left:44px;top:302.0px" width="13" height="12" viewBox="0 0 13 12"><rect x="0" y="0" width="13" height="12" fill="#5a5a5a"/><rect x="1" y="3" width="11" height="8" fill="#b4b4b4"/><rect x="0" y="0" width="13" height="3" fill="#3f79ba"/><rect x="1" y="3" width="3" height="2" fill="#fff"/><rect x="5" y="3" width="3" height="2" fill="#fff"/><rect x="9" y="3" width="3" height="2" fill="#fff"/><rect x="1" y="6" width="3" height="2" fill="#fff"/><rect x="5" y="6" width="3" height="2" fill="#fff"/><rect x="9" y="6" width="3" height="2" fill="#fff"/><rect x="1" y="9" width="3" height="2" fill="#fff"/><rect x="5" y="9" width="3" height="2" fill="#fff"/><rect x="9" y="9" width="3" height="2" fill="#fff"/></svg>
<div class="t" style="left:67.00px;top:299.50px;font-size:12px;line-height:18px;color:#3a3a3a;letter-spacing:-0.224px;">PQ Exercise 1c - Filter Non Dates</div>
<svg class="a" style="left:44px;top:326.0px" width="13" height="12" viewBox="0 0 13 12"><rect x="0" y="0" width="13" height="12" fill="#5a5a5a"/><rect x="1" y="3" width="11" height="8" fill="#b4b4b4"/><rect x="0" y="0" width="13" height="3" fill="#3f79ba"/><rect x="1" y="3" width="3" height="2" fill="#fff"/><rect x="5" y="3" width="3" height="2" fill="#fff"/><rect x="9" y="3" width="3" height="2" fill="#fff"/><rect x="1" y="6" width="3" height="2" fill="#fff"/><rect x="5" y="6" width="3" height="2" fill="#fff"/><rect x="9" y="6" width="3" height="2" fill="#fff"/><rect x="1" y="9" width="3" height="2" fill="#fff"/><rect x="5" y="9" width="3" height="2" fill="#fff"/><rect x="9" y="9" width="3" height="2" fill="#fff"/></svg>
<div class="t" style="left:67.00px;top:323.50px;font-size:12px;line-height:18px;color:#3a3a3a;letter-spacing:-0.259px;">PQ Exercise 1d - Fix Grouped Row Headers</div>
<svg class="a" style="left:44px;top:350.0px" width="13" height="12" viewBox="0 0 13 12"><rect x="0" y="0" width="13" height="12" fill="#5a5a5a"/><rect x="1" y="3" width="11" height="8" fill="#b4b4b4"/><rect x="0" y="0" width="13" height="3" fill="#3f79ba"/><rect x="1" y="3" width="3" height="2" fill="#fff"/><rect x="5" y="3" width="3" height="2" fill="#fff"/><rect x="9" y="3" width="3" height="2" fill="#fff"/><rect x="1" y="6" width="3" height="2" fill="#fff"/><rect x="5" y="6" width="3" height="2" fill="#fff"/><rect x="9" y="6" width="3" height="2" fill="#fff"/><rect x="1" y="9" width="3" height="2" fill="#fff"/><rect x="5" y="9" width="3" height="2" fill="#fff"/><rect x="9" y="9" width="3" height="2" fill="#fff"/></svg>
<div class="t" style="left:67.00px;top:347.50px;font-size:12px;line-height:18px;color:#3a3a3a;letter-spacing:-0.304px;">PQ Exercise 1z - Chapter Review</div>
<svg class="a" style="left:23.7px;top:376.7px" width="7" height="7" viewBox="0 0 7 7"><path d="M6.8 0.2 L6.8 6.8 L0.2 6.8 Z" fill="#444"/></svg>
<svg class="a" style="left:35px;top:373.0px" width="15" height="13" viewBox="0 0 15 13"><path d="M0 2.5 L8 2.5 L9 0 L15 0 L15 13 L0 13 Z" fill="#e8c17f"/><rect x="10" y="1" width="4" height="1" fill="#f7e6c8"/></svg>
<div class="t" style="left:59.00px;top:371.50px;font-size:12px;line-height:18px;color:#3a3a3a;letter-spacing:0.032px;">Extracting Information [5]</div>
<div class="a" style="left:22px;top:392.0px;width:324px;height:24px;background:#d3f0e0;"></div>
<svg class="a" style="left:44px;top:398.0px" width="13" height="12" viewBox="0 0 13 12"><rect x="0" y="0" width="13" height="12" fill="#5a5a5a"/><rect x="1" y="3" width="11" height="8" fill="#b4b4b4"/><rect x="0" y="0" width="13" height="3" fill="#3f79ba"/><rect x="1" y="3" width="3" height="2" fill="#fff"/><rect x="5" y="3" width="3" height="2" fill="#fff"/><rect x="9" y="3" width="3" height="2" fill="#fff"/><rect x="1" y="6" width="3" height="2" fill="#fff"/><rect x="5" y="6" width="3" height="2" fill="#fff"/><rect x="9" y="6" width="3" height="2" fill="#fff"/><rect x="1" y="9" width="3" height="2" fill="#fff"/><rect x="5" y="9" width="3" height="2" fill="#fff"/><rect x="9" y="9" width="3" height="2" fill="#fff"/></svg>
<div class="t" style="left:67.00px;top:395.50px;font-size:12px;line-height:18px;color:#3a3a3a;letter-spacing:-0.262px;">PQ Exercise 2a - Better Filters</div>
<svg class="a" style="left:44px;top:422.0px" width="13" height="12" viewBox="0 0 13 12"><rect x="0" y="0" width="13" height="12" fill="#5a5a5a"/><rect x="1" y="3" width="11" height="8" fill="#b4b4b4"/><rect x="0" y="0" width="13" height="3" fill="#3f79ba"/><rect x="1" y="3" width="3" height="2" fill="#fff"/><rect x="5" y="3" width="3" height="2" fill="#fff"/><rect x="9" y="3" width="3" height="2" fill="#fff"/><rect x="1" y="6" width="3" height="2" fill="#fff"/><rect x="5" y="6" width="3" height="2" fill="#fff"/><rect x="9" y="6" width="3" height="2" fill="#fff"/><rect x="1" y="9" width="3" height="2" fill="#fff"/><rect x="5" y="9" width="3" height="2" fill="#fff"/><rect x="9" y="9" width="3" height="2" fill="#fff"/></svg>
<div class="t" style="left:67.00px;top:419.50px;font-size:12px;line-height:18px;color:#3a3a3a;letter-spacing:-0.268px;">PQ Exercise 2b - Import Basic Excel File</div>
<svg class="a" style="left:44px;top:446.0px" width="13" height="12" viewBox="0 0 13 12"><rect x="0" y="0" width="13" height="12" fill="#5a5a5a"/><rect x="1" y="3" width="11" height="8" fill="#b4b4b4"/><rect x="0" y="0" width="13" height="3" fill="#3f79ba"/><rect x="1" y="3" width="3" height="2" fill="#fff"/><rect x="5" y="3" width="3" height="2" fill="#fff"/><rect x="9" y="3" width="3" height="2" fill="#fff"/><rect x="1" y="6" width="3" height="2" fill="#fff"/><rect x="5" y="6" width="3" height="2" fill="#fff"/><rect x="9" y="6" width="3" height="2" fill="#fff"/><rect x="1" y="9" width="3" height="2" fill="#fff"/><rect x="5" y="9" width="3" height="2" fill="#fff"/><rect x="9" y="9" width="3" height="2" fill="#fff"/></svg>
<div class="t" style="left:67.00px;top:443.50px;font-size:12px;line-height:18px;color:#3a3a3a;letter-spacing:-0.168px;">PQ Exercise 2c - Splitting Columns</div>
<svg class="a" style="left:44px;top:470.0px" width="13" height="12" viewBox="0 0 13 12"><rect x="0" y="0" width="13" height="12" fill="#5a5a5a"/><rect x="1" y="3" width="11" height="8" fill="#b4b4b4"/><rect x="0" y="0" width="13" height="3" fill="#3f79ba"/><rect x="1" y="3" width="3" height="2" fill="#fff"/><rect x="5" y="3" width="3" height="2" fill="#fff"/><rect x="9" y="3" width="3" height="2" fill="#fff"/><rect x="1" y="6" width="3" height="2" fill="#fff"/><rect x="5" y="6" width="3" height="2" fill="#fff"/><rect x="9" y="6" width="3" height="2" fill="#fff"/><rect x="1" y="9" width="3" height="2" fill="#fff"/><rect x="5" y="9" width="3" height="2" fill="#fff"/><rect x="9" y="9" width="3" height="2" fill="#fff"/></svg>
<div class="t" style="left:67.00px;top:467.50px;font-size:12px;line-height:18px;color:#3a3a3a;letter-spacing:-0.174px;">PQ Exercise 2d - Split Columns into Rows</div>
<svg class="a" style="left:44px;top:494.0px" width="13" height="12" viewBox="0 0 13 12"><rect x="0" y="0" width="13" height="12" fill="#5a5a5a"/><rect x="1" y="3" width="11" height="8" fill="#b4b4b4"/><rect x="0" y="0" width="13" height="3" fill="#3f79ba"/><rect x="1" y="3" width="3" height="2" fill="#fff"/><rect x="5" y="3" width="3" height="2" fill="#fff"/><rect x="9" y="3" width="3" height="2" fill="#fff"/><rect x="1" y="6" width="3" height="2" fill="#fff"/><rect x="5" y="6" width="3" height="2" fill="#fff"/><rect x="9" y="6" width="3" height="2" fill="#fff"/><rect x="1" y="9" width="3" height="2" fill="#fff"/><rect x="5" y="9" width="3" height="2" fill="#fff"/><rect x="9" y="9" width="3" height="2" fill="#fff"/></svg>
<div class="t" style="left:67.00px;top:491.50px;font-size:12px;line-height:18px;color:#3a3a3a;letter-spacing:-0.304px;">PQ Exercise 2z - Chapter Review</div>
<svg class="a" style="left:23.7px;top:520.7px" width="7" height="7" viewBox="0 0 7 7"><path d="M6.8 0.2 L6.8 6.8 L0.2 6.8 Z" fill="#444"/></svg>
<svg class="a" style="left:35px;top:517.0px" width="15" height="13" viewBox="0 0 15 13"><path d="M0 2.5 L8 2.5 L9 0 L15 0 L15 13 L0 13 Z" fill="#e8c17f"/><rect x="10" y="1" width="4" height="1" fill="#f7e6c8"/></svg>
<div class="t" style="left:59.00px;top:515.50px;font-size:12px;line-height:18px;color:#3a3a3a;letter-spacing:0.095px;">Consolidating Information [5]</div>
<svg class="a" style="left:44px;top:542.0px" width="13" height="12" viewBox="0 0 13 12"><rect x="0" y="0" width="13" height="12" fill="#5a5a5a"/><rect x="1" y="3" width="11" height="8" fill="#b4b4b4"/><rect x="0" y="0" width="13" height="3" fill="#3f79ba"/><rect x="1" y="3" width="3" height="2" fill="#fff"/><rect x="5" y="3" width="3" height="2" fill="#fff"/><rect x="9" y="3" width="3" height="2" fill="#fff"/><rect x="1" y="6" width="3" height="2" fill="#fff"/><rect x="5" y="6" width="3" height="2" fill="#fff"/><rect x="9" y="6" width="3" height="2" fill="#fff"/><rect x="1" y="9" width="3" height="2" fill="#fff"/><rect x="5" y="9" width="3" height="2" fill="#fff"/><rect x="9" y="9" width="3" height="2" fill="#fff"/></svg>
<div class="t" style="left:67.00px;top:539.50px;font-size:12px;line-height:18px;color:#3a3a3a;letter-spacing:-0.210px;">PQ Exercise 3a - Grouping Data</div>
<svg class="a" style="left:44px;top:566.0px" width="13" height="12" viewBox="0 0 13 12"><rect x="0" y="0" width="13" height="12" fill="#5a5a5a"/><rect x="1" y="3" width="11" height="8" fill="#b4b4b4"/><rect x="0" y="0" width="13" height="3" fill="#3f79ba"/><rect x="1" y="3" width="3" height="2" fill="#fff"/><rect x="5" y="3" width="3" height="2" fill="#fff"/><rect x="9" y="3" width="3" height="2" fill="#fff"/><rect x="1" y="6" width="3" height="2" fill="#fff"/><rect x="5" y="6" width="3" height="2" fill="#fff"/><rect x="9" y="6" width="3" height="2" fill="#fff"/><rect x="1" y="9" width="3" height="2" fill="#fff"/><rect x="5" y="9" width="3" height="2" fill="#fff"/><rect x="9" y="9" width="3" height="2" fill="#fff"/></svg>
<div class="t" style="left:67.00px;top:563.50px;font-size:12px;line-height:18px;color:#3a3a3a;letter-spacing:-0.130px;">PQ Exercise 3b - Merging Tables</div>
<svg class="a" style="left:44px;top:590.0px" width="13" height="12" viewBox="0 0 13 12"><rect x="0" y="0" width="13" height="12" fill="#5a5a5a"/><rect x="1" y="3" width="11" height="8" fill="#b4b4b4"/><rect x="0" y="0" width="13" height="3" fill="#3f79ba"/><rect x="1" y="3" width="3" height="2" fill="#fff"/><rect x="5" y="3" width="3" height="2" fill="#fff"/><rect x="9" y="3" width="3" height="2" fill="#fff"/><rect x="1" y="6" width="3" height="2" fill="#fff"/><rect x="5" y="6" width="3" height="2" fill="#fff"/><rect x="9" y="6" width="3" height="2" fill="#fff"/><rect x="1" y="9" width="3" height="2" fill="#fff"/><rect x="5" y="9" width="3" height="2" fill="#fff"/><rect x="9" y="9" width="3" height="2" fill="#fff"/></svg>
<div class="t" style="left:67.00px;top:587.50px;font-size:12px;line-height:18px;color:#3a3a3a;letter-spacing:-0.164px;">PQ Exercise 3b - Order Destinations</div>
<svg class="a" style="left:44px;top:614.0px" width="13" height="12" viewBox="0 0 13 12"><rect x="0" y="0" width="13" height="12" fill="#5a5a5a"/><rect x="1" y="3" width="11" height="8" fill="#b4b4b4"/><rect x="0" y="0" width="13" height="3" fill="#3f79ba"/><rect x="1" y="3" width="3" height="2" fill="#fff"/><rect x="5" y="3" width="3" height="2" fill="#fff"/><rect x="9" y="3" width="3" height="2" fill="#fff"/><rect x="1" y="6" width="3" height="2" fill="#fff"/><rect x="5" y="6" width="3" height="2" fill="#fff"/><rect x="9" y="6" width="3" height="2" fill="#fff"/><rect x="1" y="9" width="3" height="2" fill="#fff"/><rect x="5" y="9" width="3" height="2" fill="#fff"/><rect x="9" y="9" width="3" height="2" fill="#fff"/></svg>
<div class="t" style="left:67.00px;top:611.50px;font-size:12px;line-height:18px;color:#3a3a3a;letter-spacing:-0.207px;">PQ Exercise 3c - Joining Identical Files</div>
<svg class="a" style="left:44px;top:638.0px" width="13" height="12" viewBox="0 0 13 12"><rect x="0" y="0" width="13" height="12" fill="#5a5a5a"/><rect x="1" y="3" width="11" height="8" fill="#b4b4b4"/><rect x="0" y="0" width="13" height="3" fill="#3f79ba"/><rect x="1" y="3" width="3" height="2" fill="#fff"/><rect x="5" y="3" width="3" height="2" fill="#fff"/><rect x="9" y="3" width="3" height="2" fill="#fff"/><rect x="1" y="6" width="3" height="2" fill="#fff"/><rect x="5" y="6" width="3" height="2" fill="#fff"/><rect x="9" y="6" width="3" height="2" fill="#fff"/><rect x="1" y="9" width="3" height="2" fill="#fff"/><rect x="5" y="9" width="3" height="2" fill="#fff"/><rect x="9" y="9" width="3" height="2" fill="#fff"/></svg>
<div class="t" style="left:67.00px;top:635.50px;font-size:12px;line-height:18px;color:#3a3a3a;letter-spacing:-0.291px;">PQ Exercise 3z - Chapter Review</div>
<svg class="a" style="left:23.7px;top:664.7px" width="7" height="7" viewBox="0 0 7 7"><path d="M6.8 0.2 L6.8 6.8 L0.2 6.8 Z" fill="#444"/></svg>
<svg class="a" style="left:35px;top:661.0px" width="15" height="13" viewBox="0 0 15 13"><path d="M0 2.5 L8 2.5 L9 0 L15 0 L15 13 L0 13 Z" fill="#e8c17f"/><rect x="10" y="1" width="4" height="1" fill="#f7e6c8"/></svg>
<div class="t" style="left:59.00px;top:659.50px;font-size:12px;line-height:18px;color:#3a3a3a;letter-spacing:-0.209px;">Transform Files from PQ Exercise 3c [2]</div>
<svg class="a" style="left:31.7px;top:688.7px" width="7" height="7" viewBox="0 0 7 7"><path d="M6.8 0.2 L6.8 6.8 L0.2 6.8 Z" fill="#444"/></svg>
<svg class="a" style="left:43px;top:685.0px" width="15" height="13" viewBox="0 0 15 13"><path d="M0 2.5 L8 2.5 L9 0 L15 0 L15 13 L0 13 Z" fill="#e8c17f"/><rect x="10" y="1" width="4" height="1" fill="#f7e6c8"/></svg>
<div class="t" style="left:67.00px;top:683.50px;font-size:12px;line-height:18px;color:#3a3a3a;letter-spacing:-0.099px;">Helper Queries [3]</div>
<svg class="a" style="left:52px;top:708.0px" width="13" height="15" viewBox="0 0 13 15"><rect x="0.5" y="0.5" width="12" height="14" fill="#fff" stroke="#6a6a6a"/><rect x="2" y="3" width="3" height="1" fill="#8a8a8a"/><rect x="6.5" y="2.5" width="4" height="2" fill="#fff" stroke="#3b73b9"/><rect x="2" y="7" width="3" height="1" fill="#8a8a8a"/><rect x="6.5" y="6.5" width="4" height="2" fill="#fff" stroke="#3b73b9"/><rect x="2" y="11" width="3" height="1" fill="#8a8a8a"/><rect x="6.5" y="10.5" width="4" height="2" fill="#fff" stroke="#3b73b9"/></svg>
<div class="t" style="left:75.00px;top:707.50px;font-size:12px;line-height:18px;color:#3a3a3a;letter-spacing:-0.256px;">Parameter1 (Sample File)</div>
<svg class="a" style="left:52px;top:732.0px" width="14" height="15" viewBox="0 0 14 15"><rect x="0.5" y="0.5" width="13" height="14" fill="#fff" stroke="#6a6a6a"/><rect x="3" y="4" width="8" height="1" fill="#6a6a6a"/><rect x="3" y="7" width="8" height="1" fill="#6a6a6a"/><rect x="3" y="10" width="8" height="1" fill="#6a6a6a"/></svg>
<div class="t" style="left:75.00px;top:731.50px;font-size:12px;line-height:18px;color:#3a3a3a;letter-spacing:-0.306px;">Sample File</div>
<div class="t" style="left:53px;top:753px;font-family:'Liberation Serif',serif;font-style:italic;font-size:17px;line-height:20px;color:#6a6a6a;letter-spacing:-1px">fx</div>
<div class="t" style="left:75.00px;top:755.50px;font-size:12px;line-height:18px;color:#3a3a3a;letter-spacing:-0.154px;">Transform File</div>
<svg class="a" style="left:44px;top:782.0px" width="13" height="12" viewBox="0 0 13 12"><rect x="0" y="0" width="13" height="12" fill="#5a5a5a"/><rect x="1" y="3" width="11" height="8" fill="#b4b4b4"/><rect x="0" y="0" width="13" height="3" fill="#3f79ba"/><rect x="1" y="3" width="3" height="2" fill="#fff"/><rect x="5" y="3" width="3" height="2" fill="#fff"/><rect x="9" y="3" width="3" height="2" fill="#fff"/><rect x="1" y="6" width="3" height="2" fill="#fff"/><rect x="5" y="6" width="3" height="2" fill="#fff"/><rect x="9" y="6" width="3" height="2" fill="#fff"/><rect x="1" y="9" width="3" height="2" fill="#fff"/><rect x="5" y="9" width="3" height="2" fill="#fff"/><rect x="9" y="9" width="3" height="2" fill="#fff"/></svg>
<div class="t" style="left:67.00px;top:779.50px;font-size:12px;line-height:18px;color:#3a3a3a;letter-spacing:-0.105px;">Transform 3c Individual Files</div>
<svg class="a" style="left:23.7px;top:808.7px" width="7" height="7" viewBox="0 0 7 7"><path d="M6.8 0.2 L6.8 6.8 L0.2 6.8 Z" fill="#444"/></svg>
<svg class="a" style="left:35px;top:805.0px" width="15" height="13" viewBox="0 0 15 13"><path d="M0 2.5 L8 2.5 L9 0 L15 0 L15 13 L0 13 Z" fill="#e8c17f"/><rect x="10" y="1" width="4" height="1" fill="#f7e6c8"/></svg>
<div class="t" style="left:59.00px;top:803.50px;font-size:12px;line-height:18px;color:#3a3a3a;letter-spacing:-0.070px;">Dealing with Errors [6]</div>
<svg class="a" style="left:44px;top:830.0px" width="13" height="12" viewBox="0 0 13 12"><rect x="0" y="0" width="13" height="12" fill="#5a5a5a"/><rect x="1" y="3" width="11" height="8" fill="#b4b4b4"/><rect x="0" y="0" width="13" height="3" fill="#3f79ba"/><rect x="1" y="3" width="3" height="2" fill="#fff"/><rect x="5" y="3" width="3" height="2" fill="#fff"/><rect x="9" y="3" width="3" height="2" fill="#fff"/><rect x="1" y="6" width="3" height="2" fill="#fff"/><rect x="5" y="6" width="3" height="2" fill="#fff"/><rect x="9" y="6" width="3" height="2" fill="#fff"/><rect x="1" y="9" width="3" height="2" fill="#fff"/><rect x="5" y="9" width="3" height="2" fill="#fff"/><rect x="9" y="9" width="3" height="2" fill="#fff"/></svg>
<div class="t" style="left:67.00px;top:827.50px;font-size:12px;line-height:18px;color:#3a3a3a;letter-spacing:-0.381px;">PQ Exercise 4a - Basic Errors</div>
<svg class="a" style="left:44px;top:854.0px" width="13" height="12" viewBox="0 0 13 12"><rect x="0" y="0" width="13" height="12" fill="#5a5a5a"/><rect x="1" y="3" width="11" height="8" fill="#b4b4b4"/><rect x="0" y="0" width="13" height="3" fill="#3f79ba"/><rect x="1" y="3" width="3" height="2" fill="#fff"/><rect x="5" y="3" width="3" height="2" fill="#fff"/><rect x="9" y="3" width="3" height="2" fill="#fff"/><rect x="1" y="6" width="3" height="2" fill="#fff"/><rect x="5" y="6" width="3" height="2" fill="#fff"/><rect x="9" y="6" width="3" height="2" fill="#fff"/><rect x="1" y="9" width="3" height="2" fill="#fff"/><rect x="5" y="9" width="3" height="2" fill="#fff"/><rect x="9" y="9" width="3" height="2" fill="#fff"/></svg>
<div class="t" style="left:67.00px;top:851.50px;font-size:12px;line-height:18px;color:#3a3a3a;letter-spacing:-0.231px;">PQ Exercise 4b - Errors with Date Locales</div>
<svg class="a" style="left:44px;top:878.0px" width="13" height="12" viewBox="0 0 13 12"><rect x="0" y="0" width="13" height="12" fill="#5a5a5a"/><rect x="1" y="3" width="11" height="8" fill="#b4b4b4"/><rect x="0" y="0" width="13" height="3" fill="#3f79ba"/><rect x="1" y="3" width="3" height="2" fill="#fff"/><rect x="5" y="3" width="3" height="2" fill="#fff"/><rect x="9" y="3" width="3" height="2" fill="#fff"/><rect x="1" y="6" width="3" height="2" fill="#fff"/><rect x="5" y="6" width="3" height="2" fill="#fff"/><rect x="9" y="6" width="3" height="2" fill="#fff"/><rect x="1" y="9" width="3" height="2" fill="#fff"/><rect x="5" y="9" width="3" height="2" fill="#fff"/><rect x="9" y="9" width="3" height="2" fill="#fff"/></svg>
<div class="t" style="left:67.00px;top:875.50px;font-size:12px;line-height:18px;color:#3a3a3a;letter-spacing:-0.139px;">PQ Exercise 4c - Conditional Columns for Exceptions</div>
<svg class="a" style="left:43px;top:900px" width="16" height="15" viewBox="0 0 16 15"><path d="M8 0.8 L15.3 13.2 Q15.6 14.4 14.4 14.4 L1.6 14.4 Q0.4 14.4 0.7 13.2 Z" fill="#ebc17d"/><rect x="7" y="4.5" width="2" height="5" fill="#3a3a3a"/><rect x="7" y="10.5" width="2" height="2" fill="#3a3a3a"/></svg>
<div class="t" style="left:67.00px;top:899.50px;font-size:12px;line-height:18px;color:#3a3a3a;letter-spacing:-0.199px;">PQ Exercise 4d - Errors with File Locations</div>
<svg class="a" style="left:44px;top:924.0px" width="13" height="15" viewBox="0 0 13 15"><rect x="0.5" y="0.5" width="12" height="14" fill="#fff" stroke="#6a6a6a"/><rect x="2" y="3" width="3" height="1" fill="#8a8a8a"/><rect x="6.5" y="2.5" width="4" height="2" fill="#fff" stroke="#3b73b9"/><rect x="2" y="7" width="3" height="1" fill="#8a8a8a"/><rect x="6.5" y="6.5" width="4" height="2" fill="#fff" stroke="#3b73b9"/><rect x="2" y="11" width="3" height="1" fill="#8a8a8a"/><rect x="6.5" y="10.5" width="4" height="2" fill="#fff" stroke="#3b73b9"/></svg>
<div class="t" style="left:67.00px;top:923.50px;font-size:12px;line-height:18px;color:#3a3a3a;letter-spacing:-0.298px;">PQExercisesFilePath (C:\Users\seb_t\Desktop\CFI P...</div>
<svg class="a" style="left:44px;top:950.0px" width="13" height="12" viewBox="0 0 13 12"><rect x="0" y="0" width="13" height="12" fill="#5a5a5a"/><rect x="1" y="3" width="11" height="8" fill="#b4b4b4"/><rect x="0" y="0" width="13" height="3" fill="#3f79ba"/><rect x="1" y="3" width="3" height="2" fill="#fff"/><rect x="5" y="3" width="3" height="2" fill="#fff"/><rect x="9" y="3" width="3" height="2" fill="#fff"/><rect x="1" y="6" width="3" height="2" fill="#fff"/><rect x="5" y="6" width="3" height="2" fill="#fff"/><rect x="9" y="6" width="3" height="2" fill="#fff"/><rect x="1" y="9" width="3" height="2" fill="#fff"/><rect x="5" y="9" width="3" height="2" fill="#fff"/><rect x="9" y="9" width="3" height="2" fill="#fff"/></svg>
<div class="t" style="left:67.00px;top:947.50px;font-size:12px;line-height:18px;color:#3a3a3a;letter-spacing:-0.291px;">PQ Exercise 4z - Chapter Review</div>
<svg class="a" style="left:35px;top:973.0px" width="15" height="13" viewBox="0 0 15 13"><path d="M0 2.5 L8 2.5 L9 0 L15 0 L15 13 L0 13 Z" fill="#e8c17f"/><rect x="10" y="1" width="4" height="1" fill="#f7e6c8"/></svg>
<div class="t" style="left:59.00px;top:971.50px;font-size:12px;line-height:18px;color:#3a3a3a;letter-spacing:-0.114px;">Other Queries</div>
<div class="a" style="left:365px;top:157px;width:110px;height:28px;background:#ffffff;border:1px solid #ababab;box-sizing:border-box;"></div>
<svg class="a" style="left:378px;top:163px" width="16" height="16" viewBox="0 0 16 16"><path d="M2 2 L14 14 M14 2 L2 14" fill="none" stroke="#c8c8c8" stroke-width="1.8"/></svg>
<svg class="a" style="left:415px;top:163px" width="18" height="16" viewBox="0 0 18 16"><path d="M2 8.5 L7 13.5 L16 2" fill="none" stroke="#c8c8c8" stroke-width="2"/></svg>
<div class="t" style="left:450.5px;top:160px;font-family:'Liberation Serif',serif;font-style:italic;font-size:17px;line-height:22px;color:#5c5c5c;letter-spacing:-0.6px">fx</div>
<div class="a" style="left:479px;top:157px;width:1219px;height:28px;background:#ffffff;border:1px solid #ababab;box-sizing:border-box;"></div>
<div class="t" style="left:488.3px;top:163px;font-family:'Liberation Mono',monospace;font-size:12px;line-height:18px;letter-spacing:-0.607px"><span style="color:#1e1e1e">= Csv.Document(File.Contents(StudentFilepath &amp; </span><span style="color:#a31515">"PQ Exercise 1z.csv"</span><span style="color:#1e1e1e">),[Delimiter=</span><span style="color:#a31515">","</span><span style="color:#1e1e1e">, Encoding=</span><span style="color:#098658">1252</span><span style="color:#1e1e1e">, QuoteStyle=QuoteStyle.None])</span></div>
<svg class="a" style="left:1679px;top:166.5px" width="14" height="10" viewBox="0 0 14 10"><path d="M1.5 2.2 L6.5 7.4 L11.5 2.2" fill="none" stroke="#555" stroke-width="1.8"/></svg>
<div class="a" style="left:395px;top:215px;width:1303px;height:567px;background:#ffffff;"></div>
<div class="a" style="left:365px;top:189px;width:1333px;height:26px;background:#e6e6e6;"></div>
<div class="a" style="left:395px;top:189px;width:160px;height:593px;background:#d3f0e0;"></div>
<div class="a" style="left:365px;top:189px;width:30px;height:593px;background:#e6e6e6;"></div>
<div class="a" style="left:365px;top:189px;width:1333px;height:1px;background:#ababab;"></div>
<div class="a" style="left:365px;top:189px;width:1px;height:593px;background:#ababab;"></div>
<div class="a" style="left:365px;top:781px;width:1333px;height:1px;background:#c0c0c0;"></div>
<div class="a" style="left:365px;top:210px;width:30px;height:1px;background:#b0b0b0;"></div>
<div class="a" style="left:365px;top:214px;width:30px;height:1px;background:#b0b0b0;"></div>
<div class="a" style="left:394px;top:189px;width:1px;height:593px;background:#ababab;"></div>
<div class="a" style="left:554px;top:189px;width:1px;height:22px;background:#ababab;"></div>
<div class="a" style="left:554px;top:215px;width:1px;height:567px;background:#d4d4d4;"></div>
<div class="a" style="left:734px;top:189px;width:1px;height:22px;background:#ababab;"></div>
<div class="a" style="left:734px;top:215px;width:1px;height:567px;background:#d4d4d4;"></div>
<div class="a" style="left:894px;top:189px;width:1px;height:22px;background:#ababab;"></div>
<div class="a" style="left:894px;top:215px;width:1px;height:567px;background:#d4d4d4;"></div>
<div class="a" style="left:1054px;top:189px;width:1px;height:22px;background:#ababab;"></div>
<div class="a" style="left:1054px;top:215px;width:1px;height:567px;background:#d4d4d4;"></div>
<div class="a" style="left:1214px;top:189px;width:1px;height:22px;background:#ababab;"></div>
<div class="a" style="left:1214px;top:215px;width:1px;height:567px;background:#d4d4d4;"></div>
<div class="a" style="left:1374px;top:189px;width:1px;height:22px;background:#ababab;"></div>
<div class="a" style="left:1374px;top:215px;width:1px;height:567px;background:#d4d4d4;"></div>
<div class="a" style="left:1534px;top:189px;width:1px;height:22px;background:#ababab;"></div>
<div class="a" style="left:1534px;top:215px;width:1px;height:567px;background:#d4d4d4;"></div>
<div class="a" style="left:1694px;top:189px;width:1px;height:22px;background:#ababab;"></div>
<div class="a" style="left:1694px;top:215px;width:1px;height:567px;background:#d4d4d4;"></div>
<div class="a" style="left:395px;top:235px;width:1303px;height:1px;background:#d4d4d4;"></div>
<div class="a" style="left:365px;top:235px;width:30px;height:1px;background:#b2b2b2;"></div>
<div class="a" style="left:395px;top:256px;width:1303px;height:1px;background:#d4d4d4;"></div>
<div class="a" style="left:365px;top:256px;width:30px;height:1px;background:#b2b2b2;"></div>
<div class="a" style="left:395px;top:277px;width:1303px;height:1px;background:#d4d4d4;"></div>
<div class="a" style="left:365px;top:277px;width:30px;height:1px;background:#b2b2b2;"></div>
<div class="a" style="left:395px;top:298px;width:1303px;height:1px;background:#d4d4d4;"></div>
<div class="a" style="left:365px;top:298px;width:30px;height:1px;background:#b2b2b2;"></div>
<div class="a" style="left:395px;top:319px;width:1303px;height:1px;background:#d4d4d4;"></div>
<div class="a" style="left:365px;top:319px;width:30px;height:1px;background:#b2b2b2;"></div>
<div class="a" style="left:395px;top:340px;width:1303px;height:1px;background:#d4d4d4;"></div>
<div class="a" style="left:365px;top:340px;width:30px;height:1px;background:#b2b2b2;"></div>
<div class="a" style="left:395px;top:361px;width:1303px;height:1px;background:#d4d4d4;"></div>
<div class="a" style="left:365px;top:361px;width:30px;height:1px;background:#b2b2b2;"></div>
<div class="a" style="left:395px;top:382px;width:1303px;height:1px;background:#d4d4d4;"></div>
<div class="a" style="left:365px;top:382px;width:30px;height:1px;background:#b2b2b2;"></div>
<div class="a" style="left:395px;top:403px;width:1303px;height:1px;background:#d4d4d4;"></div>
<div class="a" style="left:365px;top:403px;width:30px;height:1px;background:#b2b2b2;"></div>
<div class="a" style="left:395px;top:424px;width:1303px;height:1px;background:#d4d4d4;"></div>
<div class="a" style="left:365px;top:424px;width:30px;height:1px;background:#b2b2b2;"></div>
<div class="a" style="left:395px;top:445px;width:1303px;height:1px;background:#d4d4d4;"></div>
<div class="a" style="left:365px;top:445px;width:30px;height:1px;background:#b2b2b2;"></div>
<div class="a" style="left:395px;top:466px;width:1303px;height:1px;background:#d4d4d4;"></div>
<div class="a" style="left:365px;top:466px;width:30px;height:1px;background:#b2b2b2;"></div>
<div class="a" style="left:395px;top:487px;width:1303px;height:1px;background:#d4d4d4;"></div>
<div class="a" style="left:365px;top:487px;width:30px;height:1px;background:#b2b2b2;"></div>
<div class="a" style="left:395px;top:508px;width:1303px;height:1px;background:#d4d4d4;"></div>
<div class="a" style="left:365px;top:508px;width:30px;height:1px;background:#b2b2b2;"></div>
<div class="a" style="left:395px;top:529px;width:1303px;height:1px;background:#d4d4d4;"></div>
<div class="a" style="left:365px;top:529px;width:30px;height:1px;background:#b2b2b2;"></div>
<div class="a" style="left:395px;top:550px;width:1303px;height:1px;background:#d4d4d4;"></div>
<div class="a" style="left:365px;top:550px;width:30px;height:1px;background:#b2b2b2;"></div>
<div class="a" style="left:395px;top:571px;width:1303px;height:1px;background:#d4d4d4;"></div>
<div class="a" style="left:365px;top:571px;width:30px;height:1px;background:#b2b2b2;"></div>
<div class="a" style="left:395px;top:592px;width:1303px;height:1px;background:#d4d4d4;"></div>
<div class="a" style="left:365px;top:592px;width:30px;height:1px;background:#b2b2b2;"></div>
<div class="a" style="left:395px;top:613px;width:1303px;height:1px;background:#d4d4d4;"></div>
<div class="a" style="left:365px;top:613px;width:30px;height:1px;background:#b2b2b2;"></div>
<div class="a" style="left:395px;top:634px;width:1303px;height:1px;background:#d4d4d4;"></div>
<div class="a" style="left:365px;top:634px;width:30px;height:1px;background:#b2b2b2;"></div>
<div class="a" style="left:395px;top:655px;width:1303px;height:1px;background:#d4d4d4;"></div>
<div class="a" style="left:365px;top:655px;width:30px;height:1px;background:#b2b2b2;"></div>
<div class="a" style="left:395px;top:676px;width:1303px;height:1px;background:#d4d4d4;"></div>
<div class="a" style="left:365px;top:676px;width:30px;height:1px;background:#b2b2b2;"></div>
<div class="a" style="left:395px;top:697px;width:1303px;height:1px;background:#d4d4d4;"></div>
<div class="a" style="left:365px;top:697px;width:30px;height:1px;background:#b2b2b2;"></div>
<div class="a" style="left:395px;top:718px;width:1303px;height:1px;background:#d4d4d4;"></div>
<div class="a" style="left:365px;top:718px;width:30px;height:1px;background:#b2b2b2;"></div>
<div class="a" style="left:395px;top:739px;width:1303px;height:1px;background:#d4d4d4;"></div>
<div class="a" style="left:365px;top:739px;width:30px;height:1px;background:#b2b2b2;"></div>
<div class="a" style="left:395px;top:760px;width:1303px;height:1px;background:#d4d4d4;"></div>
<div class="a" style="left:365px;top:760px;width:30px;height:1px;background:#b2b2b2;"></div>
<div class="a" style="left:395px;top:781px;width:1303px;height:1px;background:#d4d4d4;"></div>
<div class="a" style="left:365px;top:781px;width:30px;height:1px;background:#b2b2b2;"></div>
<div class="a" style="left:395px;top:211px;width:159px;height:4px;background:#5f5f5f;"></div>
<div class="a" style="left:395px;top:211px;width:135px;height:4px;background:#01b4a4;"></div>
<div class="a" style="left:555px;top:211px;width:179px;height:4px;background:#5f5f5f;"></div>
<div class="a" style="left:555px;top:211px;width:152px;height:4px;background:#01b4a4;"></div>
<div class="a" style="left:735px;top:211px;width:159px;height:4px;background:#5f5f5f;"></div>
<div class="a" style="left:735px;top:211px;width:29px;height:4px;background:#01b4a4;"></div>
<div class="a" style="left:895px;top:211px;width:159px;height:4px;background:#5f5f5f;"></div>
<div class="a" style="left:895px;top:211px;width:100px;height:4px;background:#01b4a4;"></div>
<div class="a" style="left:1055px;top:211px;width:159px;height:4px;background:#5f5f5f;"></div>
<div class="a" style="left:1055px;top:211px;width:100px;height:4px;background:#01b4a4;"></div>
<div class="a" style="left:1215px;top:211px;width:159px;height:4px;background:#5f5f5f;"></div>
<div class="a" style="left:1215px;top:211px;width:100px;height:4px;background:#01b4a4;"></div>
<div class="a" style="left:1375px;top:211px;width:159px;height:4px;background:#5f5f5f;"></div>
<div class="a" style="left:1375px;top:211px;width:100px;height:4px;background:#01b4a4;"></div>
<div class="a" style="left:1535px;top:211px;width:159px;height:4px;background:#5f5f5f;"></div>
<div class="a" style="left:1535px;top:211px;width:100px;height:4px;background:#01b4a4;"></div>
<div class="a" style="left:1695px;top:211px;width:3px;height:4px;background:#01b4a4;"></div>
<svg class="a" style="left:396px;top:191px" width="19" height="19" viewBox="0 0 19 19"><g font-family="Liberation Sans" fill="#3c3c3c" stroke="#3c3c3c" stroke-width="0.2"><text x="1.0" y="13.9" font-size="10.5" textLength="6.8" lengthAdjust="spacingAndGlyphs">A</text><path transform="translate(8.3,2.0)" d="M0.55 0.5 L0.55 6.5 M0.55 0.5 L2.4 0.5 Q3.9 0.5 3.9 1.95 Q3.9 3.4 2.4 3.4 L0.55 3.4 M2.4 3.4 Q4.3 3.4 4.3 4.95 Q4.3 6.5 2.5 6.5 L0.55 6.5" fill="none" stroke="#3c3c3c" stroke-width="1.05"/><text x="11.3" y="17.1" font-size="10.2" textLength="5.9" lengthAdjust="spacingAndGlyphs">C</text></g></svg>
<div class="t" style="left:419.00px;top:191.50px;font-size:11px;line-height:17px;color:#3a3a3a;letter-spacing:-0.510px;font-weight:bold;">Column1</div>
<div class="a" style="left:536px;top:192px;width:16px;height:16px;background:#ffffff;border:1px solid #ababab;box-sizing:border-box;"></div>
<svg class="a" style="left:540.5px;top:198.5px" width="7" height="4" viewBox="0 0 7 4"><path d="M0.3 0.5 L6.7 0.5 L3.5 3.7 Z" fill="#555"/></svg>
<svg class="a" style="left:556px;top:191px" width="19" height="19" viewBox="0 0 19 19"><g font-family="Liberation Sans" fill="#3c3c3c" stroke="#3c3c3c" stroke-width="0.2"><text x="1.0" y="13.9" font-size="10.5" textLength="6.8" lengthAdjust="spacingAndGlyphs">A</text><path transform="translate(8.3,2.0)" d="M0.55 0.5 L0.55 6.5 M0.55 0.5 L2.4 0.5 Q3.9 0.5 3.9 1.95 Q3.9 3.4 2.4 3.4 L0.55 3.4 M2.4 3.4 Q4.3 3.4 4.3 4.95 Q4.3 6.5 2.5 6.5 L0.55 6.5" fill="none" stroke="#3c3c3c" stroke-width="1.05"/><text x="11.3" y="17.1" font-size="10.2" textLength="5.9" lengthAdjust="spacingAndGlyphs">C</text></g></svg>
<div class="t" style="left:579.00px;top:191.50px;font-size:11px;line-height:17px;color:#3a3a3a;letter-spacing:-0.510px;font-weight:bold;">Column2</div>
<div class="a" style="left:716px;top:192px;width:16px;height:16px;background:#ffffff;border:1px solid #ababab;box-sizing:border-box;"></div>
<svg class="a" style="left:720.5px;top:198.5px" width="7" height="4" viewBox="0 0 7 4"><path d="M0.3 0.5 L6.7 0.5 L3.5 3.7 Z" fill="#555"/></svg>
<svg class="a" style="left:736px;top:191px" width="19" height="19" viewBox="0 0 19 19"><g font-family="Liberation Sans" fill="#3c3c3c" stroke="#3c3c3c" stroke-width="0.2"><text x="1.0" y="13.9" font-size="10.5" textLength="6.8" lengthAdjust="spacingAndGlyphs">A</text><path transform="translate(8.3,2.0)" d="M0.55 0.5 L0.55 6.5 M0.55 0.5 L2.4 0.5 Q3.9 0.5 3.9 1.95 Q3.9 3.4 2.4 3.4 L0.55 3.4 M2.4 3.4 Q4.3 3.4 4.3 4.95 Q4.3 6.5 2.5 6.5 L0.55 6.5" fill="none" stroke="#3c3c3c" stroke-width="1.05"/><text x="11.3" y="17.1" font-size="10.2" textLength="5.9" lengthAdjust="spacingAndGlyphs">C</text></g></svg>
<div class="t" style="left:759.00px;top:191.50px;font-size:11px;line-height:17px;color:#3a3a3a;letter-spacing:-0.510px;font-weight:bold;">Column3</div>
<div class="a" style="left:876px;top:192px;width:16px;height:16px;background:#ffffff;border:1px solid #ababab;box-sizing:border-box;"></div>
<svg class="a" style="left:880.5px;top:198.5px" width="7" height="4" viewBox="0 0 7 4"><path d="M0.3 0.5 L6.7 0.5 L3.5 3.7 Z" fill="#555"/></svg>
<svg class="a" style="left:896px;top:191px" width="19" height="19" viewBox="0 0 19 19"><g font-family="Liberation Sans" fill="#3c3c3c" stroke="#3c3c3c" stroke-width="0.2"><text x="1.0" y="13.9" font-size="10.5" textLength="6.8" lengthAdjust="spacingAndGlyphs">A</text><path transform="translate(8.3,2.0)" d="M0.55 0.5 L0.55 6.5 M0.55 0.5 L2.4 0.5 Q3.9 0.5 3.9 1.95 Q3.9 3.4 2.4 3.4 L0.55 3.4 M2.4 3.4 Q4.3 3.4 4.3 4.95 Q4.3 6.5 2.5 6.5 L0.55 6.5" fill="none" stroke="#3c3c3c" stroke-width="1.05"/><text x="11.3" y="17.1" font-size="10.2" textLength="5.9" lengthAdjust="spacingAndGlyphs">C</text></g></svg>
<div class="t" style="left:919.00px;top:191.50px;font-size:11px;line-height:17px;color:#3a3a3a;letter-spacing:-0.510px;font-weight:bold;">Column4</div>
<div class="a" style="left:1036px;top:192px;width:16px;height:16px;background:#ffffff;border:1px solid #ababab;box-sizing:border-box;"></div>
<svg class="a" style="left:1040.5px;top:198.5px" width="7" height="4" viewBox="0 0 7 4"><path d="M0.3 0.5 L6.7 0.5 L3.5 3.7 Z" fill="#555"/></svg>
<svg class="a" style="left:1056px;top:191px" width="19" height="19" viewBox="0 0 19 19"><g font-family="Liberation Sans" fill="#3c3c3c" stroke="#3c3c3c" stroke-width="0.2"><text x="1.0" y="13.9" font-size="10.5" textLength="6.8" lengthAdjust="spacingAndGlyphs">A</text><path transform="translate(8.3,2.0)" d="M0.55 0.5 L0.55 6.5 M0.55 0.5 L2.4 0.5 Q3.9 0.5 3.9 1.95 Q3.9 3.4 2.4 3.4 L0.55 3.4 M2.4 3.4 Q4.3 3.4 4.3 4.95 Q4.3 6.5 2.5 6.5 L0.55 6.5" fill="none" stroke="#3c3c3c" stroke-width="1.05"/><text x="11.3" y="17.1" font-size="10.2" textLength="5.9" lengthAdjust="spacingAndGlyphs">C</text></g></svg>
<div class="t" style="left:1079.00px;top:191.50px;font-size:11px;line-height:17px;color:#3a3a3a;letter-spacing:-0.510px;font-weight:bold;">Column5</div>
<div class="a" style="left:1196px;top:192px;width:16px;height:16px;background:#ffffff;border:1px solid #ababab;box-sizing:border-box;"></div>
<svg class="a" style="left:1200.5px;top:198.5px" width="7" height="4" viewBox="0 0 7 4"><path d="M0.3 0.5 L6.7 0.5 L3.5 3.7 Z" fill="#555"/></svg>
<svg class="a" style="left:1216px;top:191px" width="19" height="19" viewBox="0 0 19 19"><g font-family="Liberation Sans" fill="#3c3c3c" stroke="#3c3c3c" stroke-width="0.2"><text x="1.0" y="13.9" font-size="10.5" textLength="6.8" lengthAdjust="spacingAndGlyphs">A</text><path transform="translate(8.3,2.0)" d="M0.55 0.5 L0.55 6.5 M0.55 0.5 L2.4 0.5 Q3.9 0.5 3.9 1.95 Q3.9 3.4 2.4 3.4 L0.55 3.4 M2.4 3.4 Q4.3 3.4 4.3 4.95 Q4.3 6.5 2.5 6.5 L0.55 6.5" fill="none" stroke="#3c3c3c" stroke-width="1.05"/><text x="11.3" y="17.1" font-size="10.2" textLength="5.9" lengthAdjust="spacingAndGlyphs">C</text></g></svg>
<div class="t" style="left:1239.00px;top:191.50px;font-size:11px;line-height:17px;color:#3a3a3a;letter-spacing:-0.510px;font-weight:bold;">Column6</div>
<div class="a" style="left:1356px;top:192px;width:16px;height:16px;background:#ffffff;border:1px solid #ababab;box-sizing:border-box;"></div>
<svg class="a" style="left:1360.5px;top:198.5px" width="7" height="4" viewBox="0 0 7 4"><path d="M0.3 0.5 L6.7 0.5 L3.5 3.7 Z" fill="#555"/></svg>
<svg class="a" style="left:1376px;top:191px" width="19" height="19" viewBox="0 0 19 19"><g font-family="Liberation Sans" fill="#3c3c3c" stroke="#3c3c3c" stroke-width="0.2"><text x="1.0" y="13.9" font-size="10.5" textLength="6.8" lengthAdjust="spacingAndGlyphs">A</text><path transform="translate(8.3,2.0)" d="M0.55 0.5 L0.55 6.5 M0.55 0.5 L2.4 0.5 Q3.9 0.5 3.9 1.95 Q3.9 3.4 2.4 3.4 L0.55 3.4 M2.4 3.4 Q4.3 3.4 4.3 4.95 Q4.3 6.5 2.5 6.5 L0.55 6.5" fill="none" stroke="#3c3c3c" stroke-width="1.05"/><text x="11.3" y="17.1" font-size="10.2" textLength="5.9" lengthAdjust="spacingAndGlyphs">C</text></g></svg>
<div class="t" style="left:1399.00px;top:191.50px;font-size:11px;line-height:17px;color:#3a3a3a;letter-spacing:-0.510px;font-weight:bold;">Column7</div>
<div class="a" style="left:1516px;top:192px;width:16px;height:16px;background:#ffffff;border:1px solid #ababab;box-sizing:border-box;"></div>
<svg class="a" style="left:1520.5px;top:198.5px" width="7" height="4" viewBox="0 0 7 4"><path d="M0.3 0.5 L6.7 0.5 L3.5 3.7 Z" fill="#555"/></svg>
<svg class="a" style="left:1536px;top:191px" width="19" height="19" viewBox="0 0 19 19"><g font-family="Liberation Sans" fill="#3c3c3c" stroke="#3c3c3c" stroke-width="0.2"><text x="1.0" y="13.9" font-size="10.5" textLength="6.8" lengthAdjust="spacingAndGlyphs">A</text><path transform="translate(8.3,2.0)" d="M0.55 0.5 L0.55 6.5 M0.55 0.5 L2.4 0.5 Q3.9 0.5 3.9 1.95 Q3.9 3.4 2.4 3.4 L0.55 3.4 M2.4 3.4 Q4.3 3.4 4.3 4.95 Q4.3 6.5 2.5 6.5 L0.55 6.5" fill="none" stroke="#3c3c3c" stroke-width="1.05"/><text x="11.3" y="17.1" font-size="10.2" textLength="5.9" lengthAdjust="spacingAndGlyphs">C</text></g></svg>
<div class="t" style="left:1559.00px;top:191.50px;font-size:11px;line-height:17px;color:#3a3a3a;letter-spacing:-0.510px;font-weight:bold;">Column8</div>
<div class="a" style="left:1676px;top:192px;width:16px;height:16px;background:#ffffff;border:1px solid #ababab;box-sizing:border-box;"></div>
<svg class="a" style="left:1680.5px;top:198.5px" width="7" height="4" viewBox="0 0 7 4"><path d="M0.3 0.5 L6.7 0.5 L3.5 3.7 Z" fill="#555"/></svg>
<svg class="a" style="left:371px;top:194px" width="13" height="12" viewBox="0 0 13 12"><rect x="0" y="0" width="13" height="12" fill="#5a5a5a"/><rect x="1" y="3" width="11" height="8" fill="#b4b4b4"/><rect x="0" y="0" width="13" height="3" fill="#3f79ba"/><rect x="1" y="3" width="3" height="2" fill="#fff"/><rect x="5" y="3" width="3" height="2" fill="#fff"/><rect x="9" y="3" width="3" height="2" fill="#fff"/><rect x="1" y="6" width="3" height="2" fill="#fff"/><rect x="5" y="6" width="3" height="2" fill="#fff"/><rect x="9" y="6" width="3" height="2" fill="#fff"/><rect x="1" y="9" width="3" height="2" fill="#fff"/><rect x="5" y="9" width="3" height="2" fill="#fff"/><rect x="9" y="9" width="3" height="2" fill="#fff"/></svg>
<svg class="a" style="left:385px;top:202px" width="5" height="3" viewBox="0 0 5 3"><path d="M0 0 L5 0 L2.5 3 Z" fill="#555"/></svg>
<div class="a" style="left:1697px;top:203px;width:1px;height:2px;background:#555;"></div>
<div class="t" style="left:376.86px;top:216.70px;font-size:12px;line-height:18px;color:#3c3c3c;letter-spacing:-0.550px;">1</div>
<div class="t" style="left:398.20px;top:216.50px;font-size:11px;line-height:17px;color:#3c3c3c;letter-spacing:-0.125px;">QueryName</div>
<div class="t" style="left:558.20px;top:216.50px;font-size:11px;line-height:17px;color:#3c3c3c;letter-spacing:-0.004px;">MonthlySalesAndMarginSnapshot</div>
<div class="t" style="left:376.86px;top:237.70px;font-size:12px;line-height:18px;color:#3c3c3c;letter-spacing:-0.550px;">2</div>
<div class="t" style="left:376.86px;top:258.70px;font-size:12px;line-height:18px;color:#3c3c3c;letter-spacing:-0.550px;">3</div>
<div class="t" style="left:398.20px;top:258.50px;font-size:11px;line-height:17px;color:#3c3c3c;letter-spacing:-0.240px;">Server</div>
<div class="t" style="left:558.20px;top:258.50px;font-size:11px;line-height:17px;color:#3c3c3c;letter-spacing:-0.407px;">CFI_Retail</div>
<div class="t" style="left:376.86px;top:279.70px;font-size:12px;line-height:18px;color:#3c3c3c;letter-spacing:-0.550px;">4</div>
<div class="t" style="left:376.86px;top:300.70px;font-size:12px;line-height:18px;color:#3c3c3c;letter-spacing:-0.550px;">5</div>
<div class="t" style="left:398.20px;top:300.50px;font-size:11px;line-height:17px;color:#3c3c3c;letter-spacing:-0.037px;">Config Mode</div>
<div class="t" style="left:558.20px;top:300.50px;font-size:11px;line-height:17px;color:#3c3c3c;letter-spacing:0.005px;">Admin</div>
<div class="t" style="left:376.86px;top:321.70px;font-size:12px;line-height:18px;color:#3c3c3c;letter-spacing:-0.550px;">6</div>
<div class="t" style="left:376.86px;top:342.70px;font-size:12px;line-height:18px;color:#3c3c3c;letter-spacing:-0.550px;">7</div>
<div class="t" style="left:398.20px;top:342.50px;font-size:11px;line-height:17px;color:#3c3c3c;letter-spacing:-0.095px;">Query Time</div>
<div class="t" style="left:558.20px;top:342.50px;font-size:11px;line-height:17px;color:#3c3c3c;letter-spacing:-0.128px;">4:22 PM</div>
<div class="t" style="left:376.86px;top:363.70px;font-size:12px;line-height:18px;color:#3c3c3c;letter-spacing:-0.550px;">8</div>
<div class="t" style="left:376.86px;top:384.70px;font-size:12px;line-height:18px;color:#3c3c3c;letter-spacing:-0.550px;">9</div>
<div class="t" style="left:398.20px;top:384.50px;font-size:11px;line-height:17px;color:#3c3c3c;letter-spacing:-0.198px;">Store</div>
<div class="t" style="left:558.20px;top:384.50px;font-size:11px;line-height:17px;color:#3c3c3c;letter-spacing:-0.300px;transform:scaleX(0.9565);transform-origin:0 0;">Cat</div>
<div class="t" style="left:738.20px;top:384.50px;font-size:11px;line-height:17px;color:#3c3c3c;letter-spacing:0.371px;">Metric</div>
<div class="t" style="left:898.20px;top:384.50px;font-size:11px;line-height:17px;color:#3c3c3c;letter-spacing:-0.300px;transform:scaleX(0.9625);transform-origin:0 0;">Ref1</div>
<div class="t" style="left:1058.20px;top:384.50px;font-size:11px;line-height:17px;color:#3c3c3c;letter-spacing:-0.379px;">Ref2</div>
<div class="t" style="left:1218.20px;top:384.50px;font-size:11px;line-height:17px;color:#3c3c3c;letter-spacing:0.282px;">01/01/2017</div>
<div class="t" style="left:1378.20px;top:384.50px;font-size:11px;line-height:17px;color:#3c3c3c;letter-spacing:0.282px;">02/01/2017</div>
<div class="t" style="left:1538.20px;top:384.50px;font-size:11px;line-height:17px;color:#3c3c3c;letter-spacing:0.282px;">03/01/2017</div>
<div class="t" style="left:373.80px;top:405.70px;font-size:12px;line-height:18px;color:#3c3c3c;letter-spacing:-0.550px;">10</div>
<div class="t" style="left:398.30px;top:405.50px;font-size:11px;line-height:17px;color:#3c3c3c;">1</div>
<div class="t" style="left:558.30px;top:405.50px;font-size:11px;line-height:17px;color:#3c3c3c;">1</div>
<div class="t" style="left:738.20px;top:405.50px;font-size:11px;line-height:17px;color:#3c3c3c;letter-spacing:-0.300px;transform:scaleX(0.9309);transform-origin:0 0;">Sales</div>
<div class="t" style="left:898.20px;top:405.50px;font-size:11px;line-height:17px;color:#3c3c3c;letter-spacing:-0.300px;transform:scaleX(0.8876);transform-origin:0 0;">11XXSYS</div>
<div class="t" style="left:1058.20px;top:405.50px;font-size:11px;line-height:17px;color:#3c3c3c;letter-spacing:-0.356px;">Sales11</div>
<div class="t" style="left:1218.20px;top:405.50px;font-size:11px;line-height:17px;color:#3c3c3c;letter-spacing:-0.203px;">24924.5</div>
<div class="t" style="left:1378.20px;top:405.50px;font-size:11px;line-height:17px;color:#3c3c3c;letter-spacing:-0.169px;">46039.49</div>
<div class="t" style="left:1538.20px;top:405.50px;font-size:11px;line-height:17px;color:#3c3c3c;letter-spacing:-0.169px;">41595.55</div>
<div class="t" style="left:374.25px;top:426.70px;font-size:12px;line-height:18px;color:#3c3c3c;letter-spacing:-0.550px;">11</div>
<div class="t" style="left:398.30px;top:426.50px;font-size:11px;line-height:17px;color:#3c3c3c;">1</div>
<div class="t" style="left:558.30px;top:426.50px;font-size:11px;line-height:17px;color:#3c3c3c;">2</div>
<div class="t" style="left:898.20px;top:426.50px;font-size:11px;line-height:17px;color:#3c3c3c;letter-spacing:-0.300px;transform:scaleX(0.8722);transform-origin:0 0;">12XXSYS</div>
<div class="t" style="left:1058.20px;top:426.50px;font-size:11px;line-height:17px;color:#3c3c3c;letter-spacing:-0.492px;">Sales12</div>
<div class="t" style="left:1218.20px;top:426.50px;font-size:11px;line-height:17px;color:#3c3c3c;letter-spacing:-0.169px;">50605.27</div>
<div class="t" style="left:1378.20px;top:426.50px;font-size:11px;line-height:17px;color:#3c3c3c;letter-spacing:-0.169px;">44682.74</div>
<div class="t" style="left:1538.20px;top:426.50px;font-size:11px;line-height:17px;color:#3c3c3c;letter-spacing:-0.169px;">47928.89</div>
<div class="t" style="left:373.80px;top:447.70px;font-size:12px;line-height:18px;color:#3c3c3c;letter-spacing:-0.550px;">12</div>
<div class="t" style="left:398.30px;top:447.50px;font-size:11px;line-height:17px;color:#3c3c3c;">1</div>
<div class="t" style="left:558.30px;top:447.50px;font-size:11px;line-height:17px;color:#3c3c3c;">3</div>
<div class="t" style="left:898.20px;top:447.50px;font-size:11px;line-height:17px;color:#3c3c3c;letter-spacing:-0.300px;transform:scaleX(0.8722);transform-origin:0 0;">13XXSYS</div>
<div class="t" style="left:1058.20px;top:447.50px;font-size:11px;line-height:17px;color:#3c3c3c;letter-spacing:-0.492px;">Sales13</div>
<div class="t" style="left:1218.20px;top:447.50px;font-size:11px;line-height:17px;color:#3c3c3c;letter-spacing:-0.169px;">13740.12</div>
<div class="t" style="left:1378.20px;top:447.50px;font-size:11px;line-height:17px;color:#3c3c3c;letter-spacing:-0.169px;">10887.84</div>
<div class="t" style="left:1538.20px;top:447.50px;font-size:11px;line-height:17px;color:#3c3c3c;letter-spacing:-0.052px;">11523.47</div>
<div class="t" style="left:373.80px;top:468.70px;font-size:12px;line-height:18px;color:#3c3c3c;letter-spacing:-0.550px;">13</div>
<div class="t" style="left:398.30px;top:468.50px;font-size:11px;line-height:17px;color:#3c3c3c;">1</div>
<div class="t" style="left:558.30px;top:468.50px;font-size:11px;line-height:17px;color:#3c3c3c;">4</div>
<div class="t" style="left:898.20px;top:468.50px;font-size:11px;line-height:17px;color:#3c3c3c;letter-spacing:-0.300px;transform:scaleX(0.8722);transform-origin:0 0;">14XXSYS</div>
<div class="t" style="left:1058.20px;top:468.50px;font-size:11px;line-height:17px;color:#3c3c3c;letter-spacing:-0.492px;">Sales14</div>
<div class="t" style="left:1218.20px;top:468.50px;font-size:11px;line-height:17px;color:#3c3c3c;letter-spacing:-0.169px;">39954.04</div>
<div class="t" style="left:1378.20px;top:468.50px;font-size:11px;line-height:17px;color:#3c3c3c;letter-spacing:-0.169px;">35351.21</div>
<div class="t" style="left:1538.20px;top:468.50px;font-size:11px;line-height:17px;color:#3c3c3c;letter-spacing:-0.169px;">36826.95</div>
<div class="t" style="left:373.80px;top:489.70px;font-size:12px;line-height:18px;color:#3c3c3c;letter-spacing:-0.550px;">14</div>
<div class="t" style="left:398.30px;top:489.50px;font-size:11px;line-height:17px;color:#3c3c3c;">1</div>
<div class="t" style="left:558.30px;top:489.50px;font-size:11px;line-height:17px;color:#3c3c3c;">1</div>
<div class="t" style="left:738.20px;top:489.50px;font-size:11px;line-height:17px;color:#3c3c3c;letter-spacing:0.195px;">Margin</div>
<div class="t" style="left:898.20px;top:489.50px;font-size:11px;line-height:17px;color:#3c3c3c;letter-spacing:-0.300px;transform:scaleX(0.8876);transform-origin:0 0;">11XXSYS</div>
<div class="t" style="left:1058.20px;top:489.50px;font-size:11px;line-height:17px;color:#3c3c3c;letter-spacing:0.265px;">Margin11</div>
<div class="t" style="left:1218.20px;top:489.50px;font-size:11px;line-height:17px;color:#3c3c3c;letter-spacing:-0.249px;">0.5432</div>
<div class="t" style="left:1378.20px;top:489.50px;font-size:11px;line-height:17px;color:#3c3c3c;letter-spacing:-0.249px;">0.5432</div>
<div class="t" style="left:1538.20px;top:489.50px;font-size:11px;line-height:17px;color:#3c3c3c;letter-spacing:-0.249px;">0.5432</div>
<div class="t" style="left:373.80px;top:510.70px;font-size:12px;line-height:18px;color:#3c3c3c;letter-spacing:-0.550px;">15</div>
<div class="t" style="left:398.30px;top:510.50px;font-size:11px;line-height:17px;color:#3c3c3c;">1</div>
<div class="t" style="left:558.30px;top:510.50px;font-size:11px;line-height:17px;color:#3c3c3c;">2</div>
<div class="t" style="left:898.20px;top:510.50px;font-size:11px;line-height:17px;color:#3c3c3c;letter-spacing:-0.300px;transform:scaleX(0.8722);transform-origin:0 0;">12XXSYS</div>
<div class="t" style="left:1058.20px;top:510.50px;font-size:11px;line-height:17px;color:#3c3c3c;letter-spacing:0.148px;">Margin12</div>
<div class="t" style="left:1218.20px;top:510.50px;font-size:11px;line-height:17px;color:#3c3c3c;letter-spacing:-0.249px;">0.5542</div>
<div class="t" style="left:1378.20px;top:510.50px;font-size:11px;line-height:17px;color:#3c3c3c;letter-spacing:-0.249px;">0.5542</div>
<div class="t" style="left:1538.20px;top:510.50px;font-size:11px;line-height:17px;color:#3c3c3c;letter-spacing:-0.249px;">0.5542</div>
<div class="t" style="left:373.80px;top:531.70px;font-size:12px;line-height:18px;color:#3c3c3c;letter-spacing:-0.550px;">16</div>
<div class="t" style="left:398.30px;top:531.50px;font-size:11px;line-height:17px;color:#3c3c3c;">1</div>
<div class="t" style="left:558.30px;top:531.50px;font-size:11px;line-height:17px;color:#3c3c3c;">3</div>
<div class="t" style="left:898.20px;top:531.50px;font-size:11px;line-height:17px;color:#3c3c3c;letter-spacing:-0.300px;transform:scaleX(0.8722);transform-origin:0 0;">13XXSYS</div>
<div class="t" style="left:1058.20px;top:531.50px;font-size:11px;line-height:17px;color:#3c3c3c;letter-spacing:0.148px;">Margin13</div>
<div class="t" style="left:1218.20px;top:531.50px;font-size:11px;line-height:17px;color:#3c3c3c;letter-spacing:-0.249px;">0.5212</div>
<div class="t" style="left:1378.20px;top:531.50px;font-size:11px;line-height:17px;color:#3c3c3c;letter-spacing:-0.249px;">0.5212</div>
<div class="t" style="left:1538.20px;top:531.50px;font-size:11px;line-height:17px;color:#3c3c3c;letter-spacing:-0.249px;">0.5212</div>
<div class="t" style="left:373.80px;top:552.70px;font-size:12px;line-height:18px;color:#3c3c3c;letter-spacing:-0.550px;">17</div>
<div class="t" style="left:398.30px;top:552.50px;font-size:11px;line-height:17px;color:#3c3c3c;">1</div>
<div class="t" style="left:558.30px;top:552.50px;font-size:11px;line-height:17px;color:#3c3c3c;">4</div>
<div class="t" style="left:898.20px;top:552.50px;font-size:11px;line-height:17px;color:#3c3c3c;letter-spacing:-0.300px;transform:scaleX(0.8722);transform-origin:0 0;">14XXSYS</div>
<div class="t" style="left:1058.20px;top:552.50px;font-size:11px;line-height:17px;color:#3c3c3c;letter-spacing:0.148px;">Margin14</div>
<div class="t" style="left:1218.20px;top:552.50px;font-size:11px;line-height:17px;color:#3c3c3c;letter-spacing:-0.249px;">0.5462</div>
<div class="t" style="left:1378.20px;top:552.50px;font-size:11px;line-height:17px;color:#3c3c3c;letter-spacing:-0.249px;">0.5462</div>
<div class="t" style="left:1538.20px;top:552.50px;font-size:11px;line-height:17px;color:#3c3c3c;letter-spacing:-0.249px;">0.5462</div>
<div class="t" style="left:373.80px;top:573.70px;font-size:12px;line-height:18px;color:#3c3c3c;letter-spacing:-0.550px;">18</div>
<div class="t" style="left:398.30px;top:573.50px;font-size:11px;line-height:17px;color:#3c3c3c;">2</div>
<div class="t" style="left:558.30px;top:573.50px;font-size:11px;line-height:17px;color:#3c3c3c;">1</div>
<div class="t" style="left:738.20px;top:573.50px;font-size:11px;line-height:17px;color:#3c3c3c;letter-spacing:-0.300px;transform:scaleX(0.9309);transform-origin:0 0;">Sales</div>
<div class="t" style="left:898.20px;top:573.50px;font-size:11px;line-height:17px;color:#3c3c3c;letter-spacing:-0.300px;transform:scaleX(0.8722);transform-origin:0 0;">21XXSYS</div>
<div class="t" style="left:1058.20px;top:573.50px;font-size:11px;line-height:17px;color:#3c3c3c;letter-spacing:-0.492px;">Sales21</div>
<div class="t" style="left:1218.20px;top:573.50px;font-size:11px;line-height:17px;color:#3c3c3c;letter-spacing:-0.169px;">35034.06</div>
<div class="t" style="left:1378.20px;top:573.50px;font-size:11px;line-height:17px;color:#3c3c3c;letter-spacing:-0.203px;">60483.7</div>
<div class="t" style="left:1538.20px;top:573.50px;font-size:11px;line-height:17px;color:#3c3c3c;letter-spacing:-0.169px;">58221.52</div>
<div class="t" style="left:373.80px;top:594.70px;font-size:12px;line-height:18px;color:#3c3c3c;letter-spacing:-0.550px;">19</div>
<div class="t" style="left:398.30px;top:594.50px;font-size:11px;line-height:17px;color:#3c3c3c;">2</div>
<div class="t" style="left:558.30px;top:594.50px;font-size:11px;line-height:17px;color:#3c3c3c;">2</div>
<div class="t" style="left:898.20px;top:594.50px;font-size:11px;line-height:17px;color:#3c3c3c;letter-spacing:-0.300px;transform:scaleX(0.8722);transform-origin:0 0;">22XXSYS</div>
<div class="t" style="left:1058.20px;top:594.50px;font-size:11px;line-height:17px;color:#3c3c3c;letter-spacing:-0.492px;">Sales22</div>
<div class="t" style="left:1218.20px;top:594.50px;font-size:11px;line-height:17px;color:#3c3c3c;letter-spacing:-0.169px;">74661.16</div>
<div class="t" style="left:1378.20px;top:594.50px;font-size:11px;line-height:17px;color:#3c3c3c;letter-spacing:-0.169px;">65487.46</div>
<div class="t" style="left:1538.20px;top:594.50px;font-size:11px;line-height:17px;color:#3c3c3c;letter-spacing:-0.169px;">70853.58</div>
<div class="t" style="left:373.80px;top:615.70px;font-size:12px;line-height:18px;color:#3c3c3c;letter-spacing:-0.550px;">20</div>
<div class="t" style="left:398.30px;top:615.50px;font-size:11px;line-height:17px;color:#3c3c3c;">2</div>
<div class="t" style="left:558.30px;top:615.50px;font-size:11px;line-height:17px;color:#3c3c3c;">3</div>
<div class="t" style="left:898.20px;top:615.50px;font-size:11px;line-height:17px;color:#3c3c3c;letter-spacing:-0.300px;transform:scaleX(0.8722);transform-origin:0 0;">23XXSYS</div>
<div class="t" style="left:1058.20px;top:615.50px;font-size:11px;line-height:17px;color:#3c3c3c;letter-spacing:-0.492px;">Sales23</div>
<div class="t" style="left:1218.20px;top:615.50px;font-size:11px;line-height:17px;color:#3c3c3c;letter-spacing:-0.203px;">16873.2</div>
<div class="t" style="left:1378.20px;top:615.50px;font-size:11px;line-height:17px;color:#3c3c3c;letter-spacing:-0.169px;">13821.01</div>
<div class="t" style="left:1538.20px;top:615.50px;font-size:11px;line-height:17px;color:#3c3c3c;letter-spacing:-0.169px;">14607.28</div>
<div class="t" style="left:373.80px;top:636.70px;font-size:12px;line-height:18px;color:#3c3c3c;letter-spacing:-0.550px;">21</div>
<div class="t" style="left:398.30px;top:636.50px;font-size:11px;line-height:17px;color:#3c3c3c;">2</div>
<div class="t" style="left:558.30px;top:636.50px;font-size:11px;line-height:17px;color:#3c3c3c;">4</div>
<div class="t" style="left:898.20px;top:636.50px;font-size:11px;line-height:17px;color:#3c3c3c;letter-spacing:-0.300px;transform:scaleX(0.8722);transform-origin:0 0;">24XXSYS</div>
<div class="t" style="left:1058.20px;top:636.50px;font-size:11px;line-height:17px;color:#3c3c3c;letter-spacing:-0.492px;">Sales24</div>
<div class="t" style="left:1218.20px;top:636.50px;font-size:11px;line-height:17px;color:#3c3c3c;letter-spacing:-0.169px;">47681.96</div>
<div class="t" style="left:1378.20px;top:636.50px;font-size:11px;line-height:17px;color:#3c3c3c;letter-spacing:-0.169px;">44197.95</div>
<div class="t" style="left:1538.20px;top:636.50px;font-size:11px;line-height:17px;color:#3c3c3c;letter-spacing:-0.169px;">46131.14</div>
<div class="t" style="left:373.80px;top:657.70px;font-size:12px;line-height:18px;color:#3c3c3c;letter-spacing:-0.550px;">22</div>
<div class="t" style="left:398.30px;top:657.50px;font-size:11px;line-height:17px;color:#3c3c3c;">2</div>
<div class="t" style="left:558.30px;top:657.50px;font-size:11px;line-height:17px;color:#3c3c3c;">1</div>
<div class="t" style="left:738.20px;top:657.50px;font-size:11px;line-height:17px;color:#3c3c3c;letter-spacing:0.195px;">Margin</div>
<div class="t" style="left:898.20px;top:657.50px;font-size:11px;line-height:17px;color:#3c3c3c;letter-spacing:-0.300px;transform:scaleX(0.8722);transform-origin:0 0;">21XXSYS</div>
<div class="t" style="left:1058.20px;top:657.50px;font-size:11px;line-height:17px;color:#3c3c3c;letter-spacing:0.148px;">Margin21</div>
<div class="t" style="left:1218.20px;top:657.50px;font-size:11px;line-height:17px;color:#3c3c3c;letter-spacing:-0.249px;">0.5432</div>
<div class="t" style="left:1378.20px;top:657.50px;font-size:11px;line-height:17px;color:#3c3c3c;letter-spacing:-0.249px;">0.5432</div>
<div class="t" style="left:1538.20px;top:657.50px;font-size:11px;line-height:17px;color:#3c3c3c;letter-spacing:-0.249px;">0.5432</div>
<div class="t" style="left:373.80px;top:678.70px;font-size:12px;line-height:18px;color:#3c3c3c;letter-spacing:-0.550px;">23</div>
<div class="t" style="left:398.30px;top:678.50px;font-size:11px;line-height:17px;color:#3c3c3c;">2</div>
<div class="t" style="left:558.30px;top:678.50px;font-size:11px;line-height:17px;color:#3c3c3c;">2</div>
<div class="t" style="left:898.20px;top:678.50px;font-size:11px;line-height:17px;color:#3c3c3c;letter-spacing:-0.300px;transform:scaleX(0.8722);transform-origin:0 0;">22XXSYS</div>
<div class="t" style="left:1058.20px;top:678.50px;font-size:11px;line-height:17px;color:#3c3c3c;letter-spacing:0.148px;">Margin22</div>
<div class="t" style="left:1218.20px;top:678.50px;font-size:11px;line-height:17px;color:#3c3c3c;letter-spacing:-0.249px;">0.5542</div>
<div class="t" style="left:1378.20px;top:678.50px;font-size:11px;line-height:17px;color:#3c3c3c;letter-spacing:-0.249px;">0.5542</div>
<div class="t" style="left:1538.20px;top:678.50px;font-size:11px;line-height:17px;color:#3c3c3c;letter-spacing:-0.249px;">0.5542</div>
<div class="t" style="left:373.80px;top:699.70px;font-size:12px;line-height:18px;color:#3c3c3c;letter-spacing:-0.550px;">24</div>
<div class="t" style="left:398.30px;top:699.50px;font-size:11px;line-height:17px;color:#3c3c3c;">2</div>
<div class="t" style="left:558.30px;top:699.50px;font-size:11px;line-height:17px;color:#3c3c3c;">3</div>
<div class="t" style="left:898.20px;top:699.50px;font-size:11px;line-height:17px;color:#3c3c3c;letter-spacing:-0.300px;transform:scaleX(0.8722);transform-origin:0 0;">23XXSYS</div>
<div class="t" style="left:1058.20px;top:699.50px;font-size:11px;line-height:17px;color:#3c3c3c;letter-spacing:0.148px;">Margin23</div>
<div class="t" style="left:1218.20px;top:699.50px;font-size:11px;line-height:17px;color:#3c3c3c;letter-spacing:-0.249px;">0.5212</div>
<div class="t" style="left:1378.20px;top:699.50px;font-size:11px;line-height:17px;color:#3c3c3c;letter-spacing:-0.249px;">0.5212</div>
<div class="t" style="left:1538.20px;top:699.50px;font-size:11px;line-height:17px;color:#3c3c3c;letter-spacing:-0.249px;">0.5212</div>
<div class="t" style="left:373.80px;top:720.70px;font-size:12px;line-height:18px;color:#3c3c3c;letter-spacing:-0.550px;">25</div>
<div class="t" style="left:398.30px;top:720.50px;font-size:11px;line-height:17px;color:#3c3c3c;">2</div>
<div class="t" style="left:558.30px;top:720.50px;font-size:11px;line-height:17px;color:#3c3c3c;">4</div>
<div class="t" style="left:898.20px;top:720.50px;font-size:11px;line-height:17px;color:#3c3c3c;letter-spacing:-0.300px;transform:scaleX(0.8722);transform-origin:0 0;">24XXSYS</div>
<div class="t" style="left:1058.20px;top:720.50px;font-size:11px;line-height:17px;color:#3c3c3c;letter-spacing:0.148px;">Margin24</div>
<div class="t" style="left:1218.20px;top:720.50px;font-size:11px;line-height:17px;color:#3c3c3c;letter-spacing:-0.249px;">0.5462</div>
<div class="t" style="left:1378.20px;top:720.50px;font-size:11px;line-height:17px;color:#3c3c3c;letter-spacing:-0.249px;">0.5462</div>
<div class="t" style="left:1538.20px;top:720.50px;font-size:11px;line-height:17px;color:#3c3c3c;letter-spacing:-0.249px;">0.5462</div>
<div class="t" style="left:373.80px;top:741.70px;font-size:12px;line-height:18px;color:#3c3c3c;letter-spacing:-0.550px;">26</div>
<div class="t" style="left:398.20px;top:741.50px;font-size:11px;line-height:17px;color:#3c3c3c;letter-spacing:-0.300px;transform:scaleX(0.8001);transform-origin:0 0;">XY</div>
<div class="t" style="left:558.20px;top:741.50px;font-size:11px;line-height:17px;color:#3c3c3c;letter-spacing:-0.196px;">Report Code 1</div>
<div class="t" style="left:373.80px;top:762.70px;font-size:12px;line-height:18px;color:#3c3c3c;letter-spacing:-0.550px;">27</div>
<div class="t" style="left:398.20px;top:762.50px;font-size:11px;line-height:17px;color:#3c3c3c;letter-spacing:-0.300px;transform:scaleX(0.8360);transform-origin:0 0;">XZ</div>
<div class="t" style="left:558.20px;top:762.50px;font-size:11px;line-height:17px;color:#3c3c3c;letter-spacing:-0.196px;">Report Code 2</div>
<div class="t" style="left:1717.00px;top:163.40px;font-size:19.5px;line-height:26px;color:#45805f;letter-spacing:-0.537px;">Query Settings</div>
<svg class="a" style="left:1930px;top:171px" width="12" height="12" viewBox="0 0 12 12"><path d="M1 1 L11 11 M11 1 L1 11" fill="none" stroke="#555" stroke-width="1.2"/></svg>
<svg class="a" style="left:1712.3px;top:210.3px" width="7" height="7" viewBox="0 0 7 7"><path d="M6.8 0.2 L6.8 6.8 L0.2 6.8 Z" fill="#444"/></svg>
<div class="t" style="left:1726.00px;top:206.35px;font-size:12.5px;line-height:18.5px;color:#217346;letter-spacing:-0.300px;transform:scaleX(0.8912);transform-origin:0 0;font-weight:bold;">PROPERTIES</div>
<div class="t" style="left:1726.00px;top:226.00px;font-size:12px;line-height:18px;color:#3a3a3a;letter-spacing:-0.337px;">Name</div>
<div class="a" style="left:1726px;top:245px;width:218px;height:21px;background:#ffffff;border:1px solid #ababab;box-sizing:border-box;"></div>
<div class="t" style="left:1732.00px;top:247.50px;font-size:11px;line-height:17px;color:#222;letter-spacing:-0.052px;">PQ Exercise 2a - Better Filters</div>
<div class="t" style="left:1726.00px;top:273.00px;font-size:12px;line-height:18px;color:#2a5f9e;letter-spacing:-0.105px;">All Properties</div>
<svg class="a" style="left:1712.3px;top:311.3px" width="7" height="7" viewBox="0 0 7 7"><path d="M6.8 0.2 L6.8 6.8 L0.2 6.8 Z" fill="#444"/></svg>
<div class="t" style="left:1726.00px;top:307.35px;font-size:12.5px;line-height:18.5px;color:#217346;letter-spacing:-0.300px;transform:scaleX(0.8986);transform-origin:0 0;font-weight:bold;">APPLIED STEPS</div>
<div class="a" style="left:1726px;top:329px;width:218px;height:737px;background:#ffffff;border:1px solid #a8a8a8;box-sizing:border-box;"></div>
<div class="a" style="left:1727px;top:330px;width:216px;height:20px;background:#9dd5b5;"></div>
<div class="t" style="left:1747.00px;top:331.50px;font-size:12px;line-height:18px;color:#3a3a3a;letter-spacing:-0.404px;">Source</div>
<svg class="a" style="left:1924px;top:334.5px" width="11" height="11" viewBox="0 0 11 11"><path d="M7.50 5.50 L10.90 5.50" stroke="#b6bab7" stroke-width="1.8"/><path d="M6.50 7.23 L8.20 10.18" stroke="#b6bab7" stroke-width="1.8"/><path d="M4.50 7.23 L2.80 10.18" stroke="#b6bab7" stroke-width="1.8"/><path d="M3.50 5.50 L0.10 5.50" stroke="#b6bab7" stroke-width="1.8"/><path d="M4.50 3.77 L2.80 0.82" stroke="#b6bab7" stroke-width="1.8"/><path d="M6.50 3.77 L8.20 0.82" stroke="#b6bab7" stroke-width="1.8"/><circle cx="5.5" cy="5.5" r="2.5" fill="none" stroke="#b6bab7" stroke-width="1.5"/></svg>
<div class="t" style="left:1747.00px;top:351.50px;font-size:12px;line-height:18px;color:#3a3a3a;letter-spacing:-0.144px;">Removed Top Rows</div>
<svg class="a" style="left:1924px;top:354.5px" width="11" height="11" viewBox="0 0 11 11"><path d="M7.50 5.50 L10.90 5.50" stroke="#b2b2b2" stroke-width="1.8"/><path d="M6.50 7.23 L8.20 10.18" stroke="#b2b2b2" stroke-width="1.8"/><path d="M4.50 7.23 L2.80 10.18" stroke="#b2b2b2" stroke-width="1.8"/><path d="M3.50 5.50 L0.10 5.50" stroke="#b2b2b2" stroke-width="1.8"/><path d="M4.50 3.77 L2.80 0.82" stroke="#b2b2b2" stroke-width="1.8"/><path d="M6.50 3.77 L8.20 0.82" stroke="#b2b2b2" stroke-width="1.8"/><circle cx="5.5" cy="5.5" r="2.5" fill="none" stroke="#b2b2b2" stroke-width="1.5"/></svg>
<div class="t" style="left:1747.00px;top:371.50px;font-size:12px;line-height:18px;color:#3a3a3a;letter-spacing:-0.114px;">Promoted Headers</div>
<svg class="a" style="left:1924px;top:374.5px" width="11" height="11" viewBox="0 0 11 11"><path d="M7.50 5.50 L10.90 5.50" stroke="#b2b2b2" stroke-width="1.8"/><path d="M6.50 7.23 L8.20 10.18" stroke="#b2b2b2" stroke-width="1.8"/><path d="M4.50 7.23 L2.80 10.18" stroke="#b2b2b2" stroke-width="1.8"/><path d="M3.50 5.50 L0.10 5.50" stroke="#b2b2b2" stroke-width="1.8"/><path d="M4.50 3.77 L2.80 0.82" stroke="#b2b2b2" stroke-width="1.8"/><path d="M6.50 3.77 L8.20 0.82" stroke="#b2b2b2" stroke-width="1.8"/><circle cx="5.5" cy="5.5" r="2.5" fill="none" stroke="#b2b2b2" stroke-width="1.5"/></svg>
<div class="t" style="left:1747.00px;top:391.50px;font-size:12px;line-height:18px;color:#3a3a3a;letter-spacing:-0.217px;">Removed Columns</div>
<div class="t" style="left:1747.00px;top:411.50px;font-size:12px;line-height:18px;color:#3a3a3a;letter-spacing:-0.218px;">Replaced Value</div>
<svg class="a" style="left:1924px;top:414.5px" width="11" height="11" viewBox="0 0 11 11"><path d="M7.50 5.50 L10.90 5.50" stroke="#b2b2b2" stroke-width="1.8"/><path d="M6.50 7.23 L8.20 10.18" stroke="#b2b2b2" stroke-width="1.8"/><path d="M4.50 7.23 L2.80 10.18" stroke="#b2b2b2" stroke-width="1.8"/><path d="M3.50 5.50 L0.10 5.50" stroke="#b2b2b2" stroke-width="1.8"/><path d="M4.50 3.77 L2.80 0.82" stroke="#b2b2b2" stroke-width="1.8"/><path d="M6.50 3.77 L8.20 0.82" stroke="#b2b2b2" stroke-width="1.8"/><circle cx="5.5" cy="5.5" r="2.5" fill="none" stroke="#b2b2b2" stroke-width="1.5"/></svg>
<div class="t" style="left:1747.00px;top:431.50px;font-size:12px;line-height:18px;color:#3a3a3a;letter-spacing:-0.069px;">Filled Down</div>
<div class="t" style="left:1747.00px;top:451.50px;font-size:12px;line-height:18px;color:#3a3a3a;letter-spacing:-0.003px;">Unpivoted Other Columns</div>
<div class="t" style="left:1747.00px;top:471.50px;font-size:12px;line-height:18px;color:#3a3a3a;letter-spacing:-0.265px;">Renamed Columns</div>
<div class="t" style="left:1747.00px;top:491.50px;font-size:12px;line-height:18px;color:#3a3a3a;letter-spacing:-0.055px;">Pivoted Column</div>
<svg class="a" style="left:1924px;top:494.5px" width="11" height="11" viewBox="0 0 11 11"><path d="M7.50 5.50 L10.90 5.50" stroke="#b2b2b2" stroke-width="1.8"/><path d="M6.50 7.23 L8.20 10.18" stroke="#b2b2b2" stroke-width="1.8"/><path d="M4.50 7.23 L2.80 10.18" stroke="#b2b2b2" stroke-width="1.8"/><path d="M3.50 5.50 L0.10 5.50" stroke="#b2b2b2" stroke-width="1.8"/><path d="M4.50 3.77 L2.80 0.82" stroke="#b2b2b2" stroke-width="1.8"/><path d="M6.50 3.77 L8.20 0.82" stroke="#b2b2b2" stroke-width="1.8"/><circle cx="5.5" cy="5.5" r="2.5" fill="none" stroke="#b2b2b2" stroke-width="1.5"/></svg>
<div class="t" style="left:1747.00px;top:511.50px;font-size:12px;line-height:18px;color:#3a3a3a;letter-spacing:-0.024px;">Duplicated Column</div>
<div class="t" style="left:1747.00px;top:531.50px;font-size:12px;line-height:18px;color:#3a3a3a;letter-spacing:-0.370px;">Parsed Date</div>
<div class="t" style="left:1747.00px;top:551.50px;font-size:12px;line-height:18px;color:#3a3a3a;letter-spacing:-0.269px;">Kept Errors</div>
<div class="t" style="left:1747.00px;top:571.50px;font-size:12px;line-height:18px;color:#3a3a3a;letter-spacing:-0.248px;">Removed Columns1</div>
<div class="t" style="left:1747.00px;top:591.50px;font-size:12px;line-height:18px;color:#3a3a3a;letter-spacing:-0.210px;">Inserted First Characters</div>
<svg class="a" style="left:1924px;top:594.5px" width="11" height="11" viewBox="0 0 11 11"><path d="M7.50 5.50 L10.90 5.50" stroke="#b2b2b2" stroke-width="1.8"/><path d="M6.50 7.23 L8.20 10.18" stroke="#b2b2b2" stroke-width="1.8"/><path d="M4.50 7.23 L2.80 10.18" stroke="#b2b2b2" stroke-width="1.8"/><path d="M3.50 5.50 L0.10 5.50" stroke="#b2b2b2" stroke-width="1.8"/><path d="M4.50 3.77 L2.80 0.82" stroke="#b2b2b2" stroke-width="1.8"/><path d="M6.50 3.77 L8.20 0.82" stroke="#b2b2b2" stroke-width="1.8"/><circle cx="5.5" cy="5.5" r="2.5" fill="none" stroke="#b2b2b2" stroke-width="1.5"/></svg>
<div class="t" style="left:1747.00px;top:611.50px;font-size:12px;line-height:18px;color:#3a3a3a;letter-spacing:-0.279px;">Filtered Rows</div>
<svg class="a" style="left:1924px;top:614.5px" width="11" height="11" viewBox="0 0 11 11"><path d="M7.50 5.50 L10.90 5.50" stroke="#b2b2b2" stroke-width="1.8"/><path d="M6.50 7.23 L8.20 10.18" stroke="#b2b2b2" stroke-width="1.8"/><path d="M4.50 7.23 L2.80 10.18" stroke="#b2b2b2" stroke-width="1.8"/><path d="M3.50 5.50 L0.10 5.50" stroke="#b2b2b2" stroke-width="1.8"/><path d="M4.50 3.77 L2.80 0.82" stroke="#b2b2b2" stroke-width="1.8"/><path d="M6.50 3.77 L8.20 0.82" stroke="#b2b2b2" stroke-width="1.8"/><circle cx="5.5" cy="5.5" r="2.5" fill="none" stroke="#b2b2b2" stroke-width="1.5"/></svg>
<div class="t" style="left:1747.00px;top:631.50px;font-size:12px;line-height:18px;color:#3a3a3a;letter-spacing:-0.181px;">Removed Columns2</div>
<div class="t" style="left:1747.00px;top:651.50px;font-size:12px;line-height:18px;color:#3a3a3a;letter-spacing:-0.310px;">Filtered Rows1</div>
<svg class="a" style="left:1924px;top:654.5px" width="11" height="11" viewBox="0 0 11 11"><path d="M7.50 5.50 L10.90 5.50" stroke="#b2b2b2" stroke-width="1.8"/><path d="M6.50 7.23 L8.20 10.18" stroke="#b2b2b2" stroke-width="1.8"/><path d="M4.50 7.23 L2.80 10.18" stroke="#b2b2b2" stroke-width="1.8"/><path d="M3.50 5.50 L0.10 5.50" stroke="#b2b2b2" stroke-width="1.8"/><path d="M4.50 3.77 L2.80 0.82" stroke="#b2b2b2" stroke-width="1.8"/><path d="M6.50 3.77 L8.20 0.82" stroke="#b2b2b2" stroke-width="1.8"/><circle cx="5.5" cy="5.5" r="2.5" fill="none" stroke="#b2b2b2" stroke-width="1.5"/></svg>
<div class="a" style="left:395px;top:1069px;width:1303px;height:17px;background:#f1f1f1;"></div>
<div class="a" style="left:429px;top:1070px;width:255px;height:15px;background:#cdcdcd;"></div>
<svg class="a" style="left:411px;top:1071px" width="10" height="13" viewBox="0 0 10 13"><path d="M8 1.5 L2.5 6.5 L8 11.5" fill="none" stroke="#505050" stroke-width="2.6"/></svg>
<svg class="a" style="left:1671px;top:1071px" width="10" height="13" viewBox="0 0 10 13"><path d="M2 1.5 L7.5 6.5 L2 11.5" fill="none" stroke="#505050" stroke-width="2.6"/></svg>
<div class="a" style="left:0px;top:1086px;width:1969px;height:1px;background:#c6c6c6;"></div>
<div class="a" style="left:0px;top:1087px;width:1969px;height:22px;background:#f3f2f1;"></div>
<div class="t" style="left:6.00px;top:1089.50px;font-size:11px;line-height:17px;color:#333;letter-spacing:-0.440px;">39 COLUMNS, 27 ROWS</div>
<div class="t" style="left:139.00px;top:1089.50px;font-size:11px;line-height:17px;color:#333;letter-spacing:0.053px;">Column profiling based on top 1000 rows</div>
<div class="t" style="left:1781.00px;top:1089.50px;font-size:11px;line-height:17px;color:#333;letter-spacing:-0.384px;">PREVIEW DOWNLOADED AT 9:15 AM</div>
<div class="a" style="left:0px;top:0px;width:1px;height:1109px;background:#ffffff;"></div>
<div class="a" style="left:1968px;top:0px;width:1px;height:1109px;background:#ffffff;"></div>
<div class="a" style="left:0px;top:1108px;width:1969px;height:1px;background:#ffffff;"></div>
</body></html>
